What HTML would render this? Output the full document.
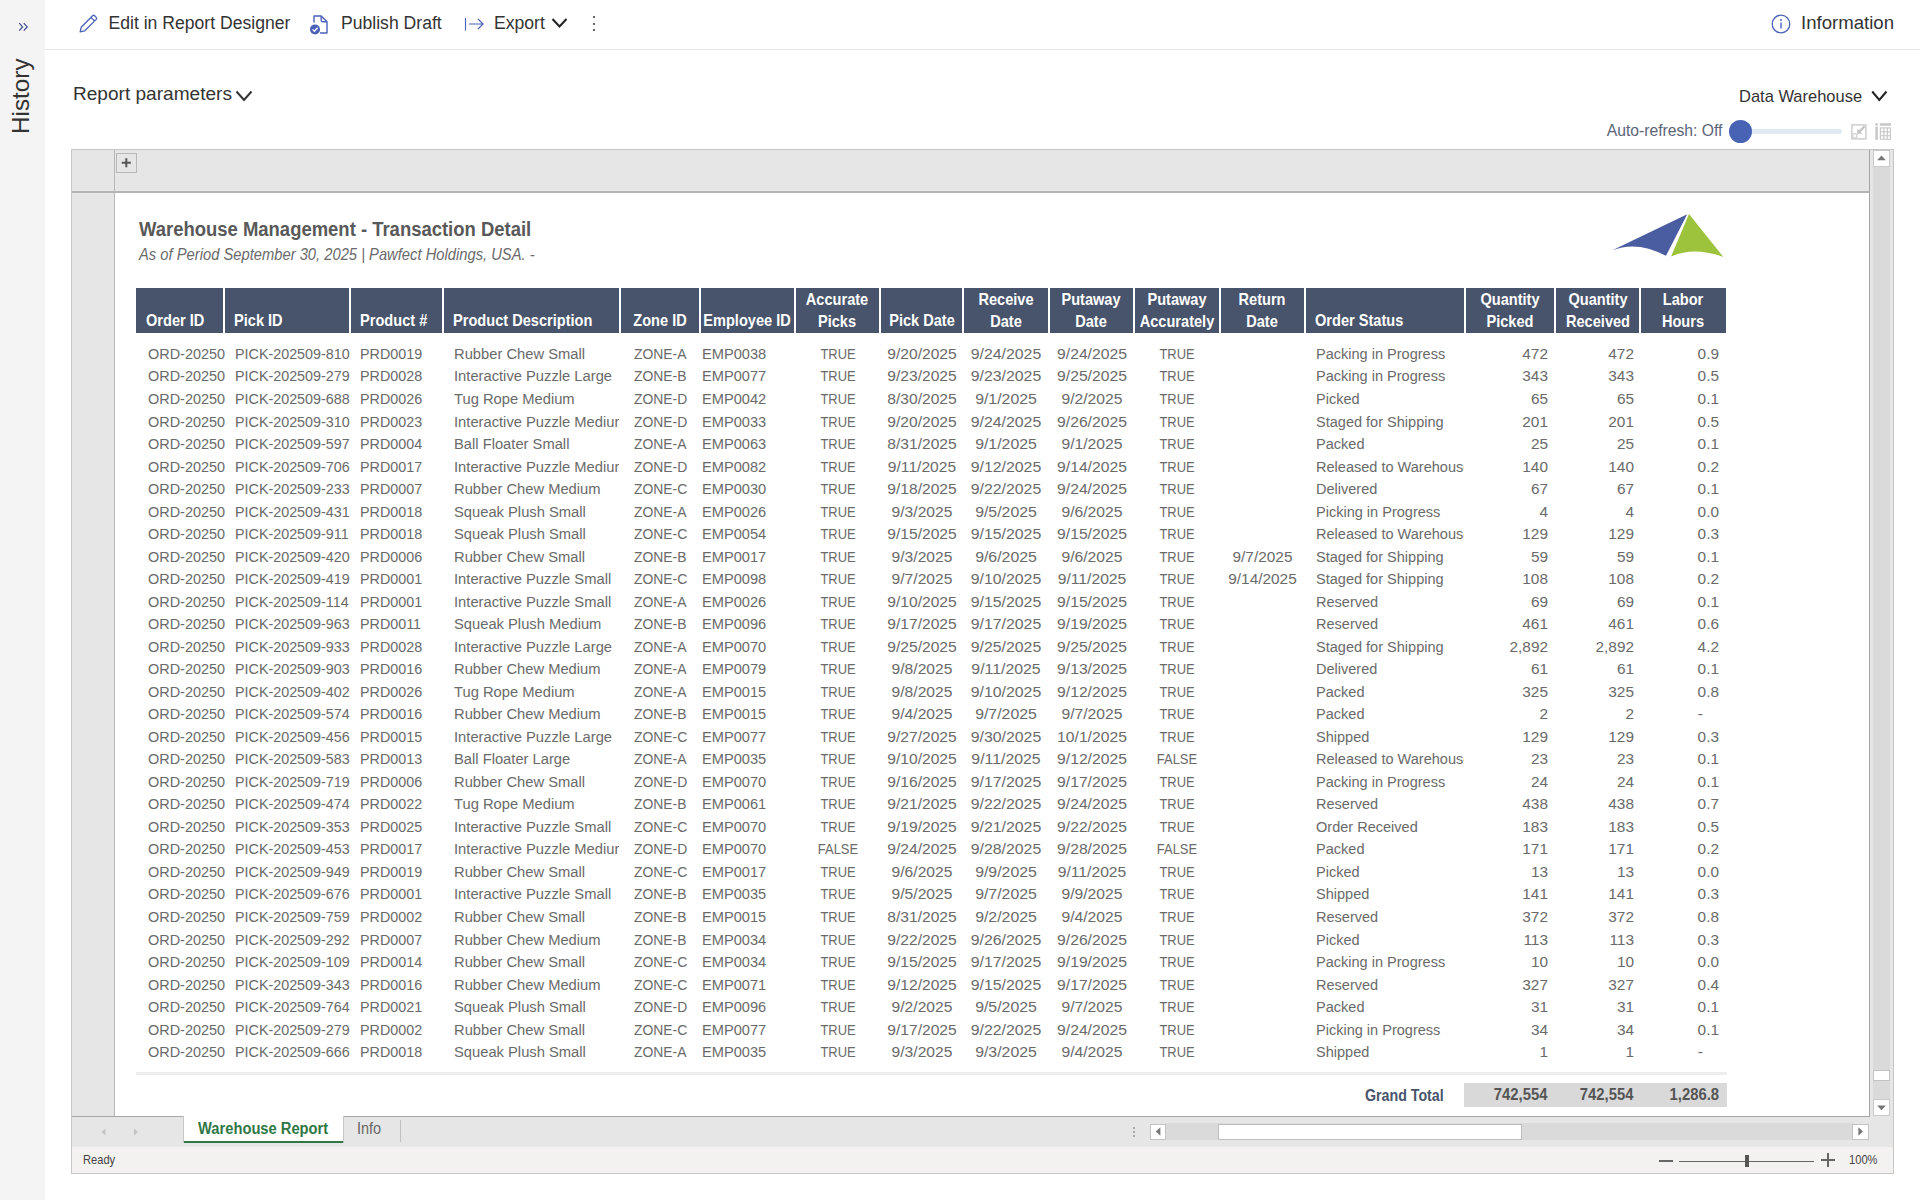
<!DOCTYPE html><html><head><meta charset="utf-8"><style>
html,body{margin:0;padding:0;overflow:hidden;}
body{width:1920px;height:1200px;position:relative;overflow:hidden;background:#fff;font-family:"Liberation Sans",sans-serif;}
.t{position:absolute;white-space:nowrap;line-height:1;}
.r{position:absolute;box-sizing:border-box;}
svg{position:absolute;overflow:visible;}
</style></head><body>
<div class="r" style="left:0px;top:0px;width:45px;height:1200px;background:#f4f4f4;"></div>
<svg style="left:18px;top:22px" width="11" height="10" viewBox="0 0 11 10"><path d="M1.2 1.2 L4.6 4.9 L1.2 8.6 M5.8 1.2 L9.2 4.9 L5.8 8.6" fill="none" stroke="#3d4b8a" stroke-width="1.2"/></svg>
<div class="t" style="left:-16px;top:84.5px;width:74px;height:24px;font-size:24.3px;color:#333;transform:rotate(-90deg);transform-origin:center center;text-align:center;">History</div>
<div class="r" style="left:45px;top:49px;width:1875px;height:1px;background:#e6e6e6;"></div>
<svg style="left:79px;top:14px" width="19" height="19" viewBox="0 0 19 19"><path d="M1.2 17.8 L2.2 13.2 L13.6 1.8 Q14.6 0.8 15.6 1.8 L17.2 3.4 Q18.2 4.4 17.2 5.4 L5.8 16.8 Z M12 3.4 L15.6 7" fill="none" stroke="#4a62b8" stroke-width="1.3" stroke-linejoin="round"/></svg>
<div class="t" style="left:108.50px;top:15.30px;font-size:17.6px;color:#333;font-weight:normal;font-style:normal;">Edit in Report Designer</div>
<svg style="left:309px;top:14px" width="20" height="22" viewBox="0 0 20 22"><path d="M5 8.5 V2 H12.2 L18 7.8 V19 H11" fill="none" stroke="#4a62b8" stroke-width="1.4" stroke-linejoin="round"/><path d="M12.2 2 V6.2 Q12.2 7.8 13.8 7.8 H18" fill="none" stroke="#4a62b8" stroke-width="1.4"/><circle cx="6" cy="15.4" r="5" fill="#4a62b8"/><path d="M3.6 15.4 L5.4 17.2 L8.6 13.8" fill="none" stroke="#fff" stroke-width="1.3"/></svg>
<div class="t" style="left:341.00px;top:15.30px;font-size:17.6px;color:#333;font-weight:normal;font-style:normal;">Publish Draft</div>
<svg style="left:464px;top:15px" width="22" height="18" viewBox="0 0 22 18"><path d="M1.5 3 V15.5 M5 9 H19 M14 4 L19 9 L14 14" fill="none" stroke="#4a62b8" stroke-width="1.15"/></svg>
<div class="t" style="left:494.00px;top:15.30px;font-size:17.6px;color:#333;font-weight:normal;font-style:normal;">Export</div>
<svg style="left:551px;top:17px" width="17" height="12" viewBox="0 0 17 12"><path d="M1.5 2 L8.5 9.5 L15.5 2" fill="none" stroke="#222" stroke-width="2"/></svg>
<div class="r" style="left:592.6px;top:16.2px;width:2.3px;height:2.3px;background:#333;border-radius:50%;"></div>
<div class="r" style="left:592.6px;top:22.7px;width:2.3px;height:2.3px;background:#333;border-radius:50%;"></div>
<div class="r" style="left:592.6px;top:29.2px;width:2.3px;height:2.3px;background:#333;border-radius:50%;"></div>
<svg style="left:1771px;top:14px" width="20" height="20" viewBox="0 0 20 20"><circle cx="10" cy="10" r="8.8" fill="none" stroke="#4a62b8" stroke-width="1.3"/><circle cx="10" cy="6" r="1" fill="#4a62b8"/><path d="M10 8.5 V14.5" stroke="#4a62b8" stroke-width="1.4"/></svg>
<div class="t" style="left:1801.00px;top:14.46px;font-size:18.6px;color:#333;font-weight:normal;font-style:normal;">Information</div>
<div class="t" style="left:73.00px;top:83.86px;font-size:19.07px;color:#333;font-weight:normal;font-style:normal;">Report parameters</div>
<svg style="left:235px;top:90px" width="18" height="12" viewBox="0 0 18 12"><path d="M1.5 1.5 L9 10 L16.5 1.5" fill="none" stroke="#333" stroke-width="2"/></svg>
<div class="t" style="left:1739.00px;top:87.81px;font-size:17px;color:#333;font-weight:normal;font-style:normal;transform:scaleX(0.97);transform-origin:left top;">Data Warehouse</div>
<svg style="left:1871px;top:90px" width="18" height="12" viewBox="0 0 18 12"><path d="M1.2 1.5 L8.3 10 L15.5 1.5" fill="none" stroke="#222" stroke-width="2"/></svg>
<div class="t" style="left:1606.70px;top:123.41px;font-size:15.7px;color:#5b6479;font-weight:normal;font-style:normal;">Auto-refresh: Off</div>
<div class="r" style="left:1740px;top:129.2px;width:102px;height:4.6px;background:#e1e9f5;border-radius:3px;"></div>
<div class="r" style="left:1729.1px;top:119.8px;width:22.8px;height:22.8px;border-radius:50%;background:#4863b3;"></div>
<svg style="left:1851px;top:124px" width="16" height="16" viewBox="0 0 16 16"><rect x="0.9" y="0.9" width="14" height="14" fill="none" stroke="#d2d2d2" stroke-width="1.6"/><rect x="1.8" y="9.8" width="4" height="4" fill="none" stroke="#d2d2d2" stroke-width="1.3"/><path d="M13.6 2.4 L7.6 8.4" stroke="#c4c4c4" stroke-width="2.2"/><path d="M6.2 4.6 V9.8 H11.4 Z" fill="#c4c4c4"/></svg>
<svg style="left:1875px;top:123px" width="17" height="17" viewBox="0 0 17 17"><g fill="#c9c9c9"><rect x="0.3" y="0.2" width="2.6" height="2.4"/><rect x="0.3" y="3.6" width="2.6" height="13.2"/><rect x="4.8" y="0.2" width="11.2" height="2.6"/><rect x="4.8" y="4.3" width="11.2" height="12.5"/></g><g fill="#fff"><rect x="6" y="5.5" width="2.3" height="2.8"/><rect x="9.5" y="5.5" width="2.3" height="2.8"/><rect x="13" y="5.5" width="1.9" height="2.8"/><rect x="6" y="9.4" width="2.3" height="2.8"/><rect x="9.5" y="9.4" width="2.3" height="2.8"/><rect x="13" y="9.4" width="1.9" height="2.8"/><rect x="6" y="13.3" width="2.3" height="2.4"/><rect x="9.5" y="13.3" width="2.3" height="2.4"/><rect x="13" y="13.3" width="1.9" height="2.4"/></g></svg>
<div class="r" style="left:71px;top:149px;width:1823px;height:1025px;background:#e6e6e6;border:1px solid #c6c6c6;"></div>
<div class="r" style="left:115px;top:193px;width:1754px;height:923px;background:#ffffff;"></div>
<div class="r" style="left:72px;top:191px;width:1797px;height:2px;background:#b4b4b4;"></div>
<div class="r" style="left:113.5px;top:150px;width:1.6px;height:966px;background:#b8b8b8;"></div>
<div class="r" style="left:1868.5px;top:150px;width:1.6px;height:967px;background:#a6a6a6;"></div>
<div class="r" style="left:72px;top:1115.5px;width:1797px;height:1.2px;background:#a6a6a6;"></div>
<div class="r" style="left:116px;top:152.5px;width:20.5px;height:20px;border:1px solid #b8b8b8;background:#e6e6e6;"></div>
<svg style="left:116px;top:152.5px" width="20" height="20" viewBox="0 0 20 20"><path d="M10.3 5.3 V14.3 M5.8 9.8 H14.8" stroke="#555" stroke-width="2"/></svg>
<div class="r" style="left:1873px;top:167px;width:17px;height:932px;background:#dadada;"></div>
<div class="r" style="left:1873.3px;top:150.3px;width:16.5px;height:16.5px;background:#fff;border:1px solid #c9c9c9;"></div>
<svg style="left:1873px;top:150px" width="17" height="17" viewBox="0 0 17 17"><path d="M4.2 10.2 L8.5 5.4 L12.8 10.2 Z" fill="#777"/></svg>
<div class="r" style="left:1873.3px;top:1070.3px;width:16.5px;height:10.5px;background:#fff;border:1px solid #c3c3c3;"></div>
<div class="r" style="left:1873.3px;top:1099.3px;width:16.5px;height:16.5px;background:#fff;border:1px solid #c9c9c9;"></div>
<svg style="left:1873px;top:1099px" width="17" height="17" viewBox="0 0 17 17"><path d="M4.2 6.6 L8.5 11.2 L12.8 6.6 Z" fill="#777"/></svg>
<div class="r" style="left:72px;top:1117px;width:1821px;height:30px;background:#e6e6e6;"></div>
<div class="r" style="left:184px;top:1116px;width:159px;height:25.5px;background:#ffffff;"></div>
<div class="r" style="left:184px;top:1141.3px;width:159px;height:2.2px;background:#2f7845;"></div>
<div class="r" style="left:182.7px;top:1116px;width:1.3px;height:27px;background:#c6c6c6;"></div>
<div class="r" style="left:342.5px;top:1116px;width:1.3px;height:27px;background:#c6c6c6;"></div>
<div class="t" style="left:198.00px;top:1120.99px;font-size:15.6px;color:#2f7845;font-weight:bold;font-style:normal;transform:scaleX(0.943);transform-origin:left top;">Warehouse Report</div>
<div class="t" style="left:356.80px;top:1120.99px;font-size:15.6px;color:#666;font-weight:normal;font-style:normal;transform:scaleX(0.93);transform-origin:left top;">Info</div>
<div class="r" style="left:399.5px;top:1120px;width:1.2px;height:22px;background:#c0c0c0;"></div>
<svg style="left:98px;top:1126px" width="44" height="12" viewBox="0 0 44 12"><path d="M7.5 2.5 L3.5 6 L7.5 9.5 Z M36 2.5 L40 6 L36 9.5 Z" fill="#c4c4c4"/></svg>
<div class="r" style="left:1133px;top:1127px;width:1.8px;height:1.8px;background:#aaa;"></div>
<div class="r" style="left:1133px;top:1131px;width:1.8px;height:1.8px;background:#aaa;"></div>
<div class="r" style="left:1133px;top:1135px;width:1.8px;height:1.8px;background:#aaa;"></div>
<div class="r" style="left:1165px;top:1123px;width:688px;height:17px;background:#dadada;"></div>
<div class="r" style="left:1150.3px;top:1123.5px;width:16px;height:16.5px;background:#fff;border:1px solid #c3c3c3;"></div>
<svg style="left:1150px;top:1123px" width="17" height="17" viewBox="0 0 17 17"><path d="M10.4 4.2 L5.8 8.5 L10.4 12.8 Z" fill="#777"/></svg>
<div class="r" style="left:1217.5px;top:1123.5px;width:304.5px;height:16.5px;background:#fff;border:1px solid #bdbdbd;"></div>
<div class="r" style="left:1852.3px;top:1123.5px;width:16.5px;height:16.5px;background:#fff;border:1px solid #c3c3c3;"></div>
<svg style="left:1852px;top:1123px" width="17" height="17" viewBox="0 0 17 17"><path d="M6.4 4.2 L11 8.5 L6.4 12.8 Z" fill="#777"/></svg>
<div class="r" style="left:72px;top:1147px;width:1821px;height:26px;background:#f3f2f1;"></div>
<div class="t" style="left:83.30px;top:1152.91px;font-size:13.1px;color:#444;font-weight:normal;font-style:normal;transform:scaleX(0.85);transform-origin:left top;">Ready</div>
<div class="r" style="left:1659.3px;top:1160.3px;width:13.5px;height:1.6px;background:#666;"></div>
<div class="r" style="left:1679px;top:1160.7px;width:134.5px;height:1.1px;background:#666;"></div>
<div class="r" style="left:1745.3px;top:1155px;width:3.6px;height:11.5px;background:#555;"></div>
<div class="r" style="left:1821px;top:1159.4px;width:13.5px;height:1.6px;background:#666;"></div>
<div class="r" style="left:1827px;top:1153px;width:1.6px;height:13.5px;background:#666;"></div>
<div class="t" style="left:1848.50px;top:1153.84px;font-size:12px;color:#444;font-weight:normal;font-style:normal;transform:scaleX(0.93);transform-origin:left top;">100%</div>
<div class="t" style="left:139.20px;top:219.83px;font-size:19.4px;color:#595959;font-weight:bold;font-style:normal;transform:scaleX(0.952);transform-origin:left top;">Warehouse Management - Transaction Detail</div>
<div class="t" style="left:139.20px;top:247.14px;font-size:15.9px;color:#6a6a6a;font-weight:normal;font-style:italic;transform:scaleX(0.928);transform-origin:left top;">As of Period September 30, 2025 | Pawfect Holdings, USA. -</div>
<svg style="left:1610px;top:210px" width="118" height="50" viewBox="0 0 118 50"><path d="M77.2 4.2 L2.4 40.3 Q26.8 30.35 56 45.8 Z" fill="#4a5da1"/><path d="M79 4 L113.3 46.9 Q83.8 36.1 61.1 46.5 Z" fill="#9dc23b"/></svg>
<div class="r" style="left:136.2px;top:287.6px;width:1589.8px;height:45.599999999999966px;background:#48546c;"></div>
<div class="r" style="left:222.75px;top:287.6px;width:2px;height:45.599999999999966px;background:#ffffff;"></div>
<div class="r" style="left:349px;top:287.6px;width:2px;height:45.599999999999966px;background:#ffffff;"></div>
<div class="r" style="left:442.3px;top:287.6px;width:2px;height:45.599999999999966px;background:#ffffff;"></div>
<div class="r" style="left:619.4px;top:287.6px;width:2px;height:45.599999999999966px;background:#ffffff;"></div>
<div class="r" style="left:699px;top:287.6px;width:2px;height:45.599999999999966px;background:#ffffff;"></div>
<div class="r" style="left:793.6px;top:287.6px;width:2px;height:45.599999999999966px;background:#ffffff;"></div>
<div class="r" style="left:879px;top:287.6px;width:2px;height:45.599999999999966px;background:#ffffff;"></div>
<div class="r" style="left:962.3px;top:287.6px;width:2px;height:45.599999999999966px;background:#ffffff;"></div>
<div class="r" style="left:1047.75px;top:287.6px;width:2px;height:45.599999999999966px;background:#ffffff;"></div>
<div class="r" style="left:1133px;top:287.6px;width:2px;height:45.599999999999966px;background:#ffffff;"></div>
<div class="r" style="left:1218.6px;top:287.6px;width:2px;height:45.599999999999966px;background:#ffffff;"></div>
<div class="r" style="left:1304px;top:287.6px;width:2px;height:45.599999999999966px;background:#ffffff;"></div>
<div class="r" style="left:1463.6px;top:287.6px;width:2px;height:45.599999999999966px;background:#ffffff;"></div>
<div class="r" style="left:1554px;top:287.6px;width:2px;height:45.599999999999966px;background:#ffffff;"></div>
<div class="r" style="left:1639.4px;top:287.6px;width:2px;height:45.599999999999966px;background:#ffffff;"></div>
<div class="t" style="left:146.40px;top:313.01px;font-size:15.7px;color:#fff;font-weight:bold;font-style:normal;transform:scaleX(0.93);transform-origin:left top;">Order ID</div>
<div class="t" style="left:234.15px;top:313.01px;font-size:15.7px;color:#fff;font-weight:bold;font-style:normal;transform:scaleX(0.93);transform-origin:left top;">Pick ID</div>
<div class="t" style="left:360.40px;top:313.01px;font-size:15.7px;color:#fff;font-weight:bold;font-style:normal;transform:scaleX(0.93);transform-origin:left top;">Product #</div>
<div class="t" style="left:452.70px;top:313.01px;font-size:15.7px;color:#fff;font-weight:bold;font-style:normal;transform:scaleX(0.93);transform-origin:left top;">Product Description</div>
<div class="t" style="left:160.20px;width:1000px;text-align:center;top:313.01px;font-size:15.7px;color:#fff;font-weight:bold;font-style:normal;transform:scaleX(0.93);transform-origin:center top;">Zone ID</div>
<div class="t" style="left:247.30px;width:1000px;text-align:center;top:313.01px;font-size:15.7px;color:#fff;font-weight:bold;font-style:normal;transform:scaleX(0.93);transform-origin:center top;">Employee ID</div>
<div class="t" style="left:337.30px;width:1000px;text-align:center;top:291.71px;font-size:15.7px;color:#fff;font-weight:bold;font-style:normal;transform:scaleX(0.93);transform-origin:center top;">Accurate</div>
<div class="t" style="left:337.30px;width:1000px;text-align:center;top:313.51px;font-size:15.7px;color:#fff;font-weight:bold;font-style:normal;transform:scaleX(0.93);transform-origin:center top;">Picks</div>
<div class="t" style="left:421.65px;width:1000px;text-align:center;top:313.01px;font-size:15.7px;color:#fff;font-weight:bold;font-style:normal;transform:scaleX(0.93);transform-origin:center top;">Pick Date</div>
<div class="t" style="left:506.02px;width:1000px;text-align:center;top:291.71px;font-size:15.7px;color:#fff;font-weight:bold;font-style:normal;transform:scaleX(0.93);transform-origin:center top;">Receive</div>
<div class="t" style="left:506.02px;width:1000px;text-align:center;top:313.51px;font-size:15.7px;color:#fff;font-weight:bold;font-style:normal;transform:scaleX(0.93);transform-origin:center top;">Date</div>
<div class="t" style="left:591.38px;width:1000px;text-align:center;top:291.71px;font-size:15.7px;color:#fff;font-weight:bold;font-style:normal;transform:scaleX(0.93);transform-origin:center top;">Putaway</div>
<div class="t" style="left:591.38px;width:1000px;text-align:center;top:313.51px;font-size:15.7px;color:#fff;font-weight:bold;font-style:normal;transform:scaleX(0.93);transform-origin:center top;">Date</div>
<div class="t" style="left:676.80px;width:1000px;text-align:center;top:291.71px;font-size:15.7px;color:#fff;font-weight:bold;font-style:normal;transform:scaleX(0.93);transform-origin:center top;">Putaway</div>
<div class="t" style="left:676.80px;width:1000px;text-align:center;top:313.51px;font-size:15.7px;color:#fff;font-weight:bold;font-style:normal;transform:scaleX(0.93);transform-origin:center top;">Accurately</div>
<div class="t" style="left:762.30px;width:1000px;text-align:center;top:291.71px;font-size:15.7px;color:#fff;font-weight:bold;font-style:normal;transform:scaleX(0.93);transform-origin:center top;">Return</div>
<div class="t" style="left:762.30px;width:1000px;text-align:center;top:313.51px;font-size:15.7px;color:#fff;font-weight:bold;font-style:normal;transform:scaleX(0.93);transform-origin:center top;">Date</div>
<div class="t" style="left:1315.40px;top:313.01px;font-size:15.7px;color:#fff;font-weight:bold;font-style:normal;transform:scaleX(0.93);transform-origin:left top;">Order Status</div>
<div class="t" style="left:1009.80px;width:1000px;text-align:center;top:291.71px;font-size:15.7px;color:#fff;font-weight:bold;font-style:normal;transform:scaleX(0.93);transform-origin:center top;">Quantity</div>
<div class="t" style="left:1009.80px;width:1000px;text-align:center;top:313.51px;font-size:15.7px;color:#fff;font-weight:bold;font-style:normal;transform:scaleX(0.93);transform-origin:center top;">Picked</div>
<div class="t" style="left:1097.70px;width:1000px;text-align:center;top:291.71px;font-size:15.7px;color:#fff;font-weight:bold;font-style:normal;transform:scaleX(0.93);transform-origin:center top;">Quantity</div>
<div class="t" style="left:1097.70px;width:1000px;text-align:center;top:313.51px;font-size:15.7px;color:#fff;font-weight:bold;font-style:normal;transform:scaleX(0.93);transform-origin:center top;">Received</div>
<div class="t" style="left:1183.20px;width:1000px;text-align:center;top:291.71px;font-size:15.7px;color:#fff;font-weight:bold;font-style:normal;transform:scaleX(0.93);transform-origin:center top;">Labor</div>
<div class="t" style="left:1183.20px;width:1000px;text-align:center;top:313.51px;font-size:15.7px;color:#fff;font-weight:bold;font-style:normal;transform:scaleX(0.93);transform-origin:center top;">Hours</div>
<div style="position:absolute;left:0;top:0;width:619px;height:1200px;overflow:hidden;">
<div class="t" style="left:453.50px;top:345.96px;font-size:15.4px;color:#6a6a6a;font-weight:normal;font-style:normal;transform:scaleX(0.957);transform-origin:left top;">Rubber Chew Small</div>
<div class="t" style="left:453.50px;top:368.49px;font-size:15.4px;color:#6a6a6a;font-weight:normal;font-style:normal;transform:scaleX(0.957);transform-origin:left top;">Interactive Puzzle Large</div>
<div class="t" style="left:453.50px;top:391.01px;font-size:15.4px;color:#6a6a6a;font-weight:normal;font-style:normal;transform:scaleX(0.957);transform-origin:left top;">Tug Rope Medium</div>
<div class="t" style="left:453.50px;top:413.53px;font-size:15.4px;color:#6a6a6a;font-weight:normal;font-style:normal;transform:scaleX(0.957);transform-origin:left top;">Interactive Puzzle Medium</div>
<div class="t" style="left:453.50px;top:436.05px;font-size:15.4px;color:#6a6a6a;font-weight:normal;font-style:normal;transform:scaleX(0.957);transform-origin:left top;">Ball Floater Small</div>
<div class="t" style="left:453.50px;top:458.57px;font-size:15.4px;color:#6a6a6a;font-weight:normal;font-style:normal;transform:scaleX(0.957);transform-origin:left top;">Interactive Puzzle Medium</div>
<div class="t" style="left:453.50px;top:481.10px;font-size:15.4px;color:#6a6a6a;font-weight:normal;font-style:normal;transform:scaleX(0.957);transform-origin:left top;">Rubber Chew Medium</div>
<div class="t" style="left:453.50px;top:503.62px;font-size:15.4px;color:#6a6a6a;font-weight:normal;font-style:normal;transform:scaleX(0.957);transform-origin:left top;">Squeak Plush Small</div>
<div class="t" style="left:453.50px;top:526.14px;font-size:15.4px;color:#6a6a6a;font-weight:normal;font-style:normal;transform:scaleX(0.957);transform-origin:left top;">Squeak Plush Small</div>
<div class="t" style="left:453.50px;top:548.66px;font-size:15.4px;color:#6a6a6a;font-weight:normal;font-style:normal;transform:scaleX(0.957);transform-origin:left top;">Rubber Chew Small</div>
<div class="t" style="left:453.50px;top:571.18px;font-size:15.4px;color:#6a6a6a;font-weight:normal;font-style:normal;transform:scaleX(0.957);transform-origin:left top;">Interactive Puzzle Small</div>
<div class="t" style="left:453.50px;top:593.71px;font-size:15.4px;color:#6a6a6a;font-weight:normal;font-style:normal;transform:scaleX(0.957);transform-origin:left top;">Interactive Puzzle Small</div>
<div class="t" style="left:453.50px;top:616.23px;font-size:15.4px;color:#6a6a6a;font-weight:normal;font-style:normal;transform:scaleX(0.957);transform-origin:left top;">Squeak Plush Medium</div>
<div class="t" style="left:453.50px;top:638.75px;font-size:15.4px;color:#6a6a6a;font-weight:normal;font-style:normal;transform:scaleX(0.957);transform-origin:left top;">Interactive Puzzle Large</div>
<div class="t" style="left:453.50px;top:661.27px;font-size:15.4px;color:#6a6a6a;font-weight:normal;font-style:normal;transform:scaleX(0.957);transform-origin:left top;">Rubber Chew Medium</div>
<div class="t" style="left:453.50px;top:683.79px;font-size:15.4px;color:#6a6a6a;font-weight:normal;font-style:normal;transform:scaleX(0.957);transform-origin:left top;">Tug Rope Medium</div>
<div class="t" style="left:453.50px;top:706.32px;font-size:15.4px;color:#6a6a6a;font-weight:normal;font-style:normal;transform:scaleX(0.957);transform-origin:left top;">Rubber Chew Medium</div>
<div class="t" style="left:453.50px;top:728.84px;font-size:15.4px;color:#6a6a6a;font-weight:normal;font-style:normal;transform:scaleX(0.957);transform-origin:left top;">Interactive Puzzle Large</div>
<div class="t" style="left:453.50px;top:751.36px;font-size:15.4px;color:#6a6a6a;font-weight:normal;font-style:normal;transform:scaleX(0.957);transform-origin:left top;">Ball Floater Large</div>
<div class="t" style="left:453.50px;top:773.88px;font-size:15.4px;color:#6a6a6a;font-weight:normal;font-style:normal;transform:scaleX(0.957);transform-origin:left top;">Rubber Chew Small</div>
<div class="t" style="left:453.50px;top:796.40px;font-size:15.4px;color:#6a6a6a;font-weight:normal;font-style:normal;transform:scaleX(0.957);transform-origin:left top;">Tug Rope Medium</div>
<div class="t" style="left:453.50px;top:818.93px;font-size:15.4px;color:#6a6a6a;font-weight:normal;font-style:normal;transform:scaleX(0.957);transform-origin:left top;">Interactive Puzzle Small</div>
<div class="t" style="left:453.50px;top:841.45px;font-size:15.4px;color:#6a6a6a;font-weight:normal;font-style:normal;transform:scaleX(0.957);transform-origin:left top;">Interactive Puzzle Medium</div>
<div class="t" style="left:453.50px;top:863.97px;font-size:15.4px;color:#6a6a6a;font-weight:normal;font-style:normal;transform:scaleX(0.957);transform-origin:left top;">Rubber Chew Small</div>
<div class="t" style="left:453.50px;top:886.49px;font-size:15.4px;color:#6a6a6a;font-weight:normal;font-style:normal;transform:scaleX(0.957);transform-origin:left top;">Interactive Puzzle Small</div>
<div class="t" style="left:453.50px;top:909.01px;font-size:15.4px;color:#6a6a6a;font-weight:normal;font-style:normal;transform:scaleX(0.957);transform-origin:left top;">Rubber Chew Small</div>
<div class="t" style="left:453.50px;top:931.54px;font-size:15.4px;color:#6a6a6a;font-weight:normal;font-style:normal;transform:scaleX(0.957);transform-origin:left top;">Rubber Chew Medium</div>
<div class="t" style="left:453.50px;top:954.06px;font-size:15.4px;color:#6a6a6a;font-weight:normal;font-style:normal;transform:scaleX(0.957);transform-origin:left top;">Rubber Chew Small</div>
<div class="t" style="left:453.50px;top:976.58px;font-size:15.4px;color:#6a6a6a;font-weight:normal;font-style:normal;transform:scaleX(0.957);transform-origin:left top;">Rubber Chew Medium</div>
<div class="t" style="left:453.50px;top:999.10px;font-size:15.4px;color:#6a6a6a;font-weight:normal;font-style:normal;transform:scaleX(0.957);transform-origin:left top;">Squeak Plush Small</div>
<div class="t" style="left:453.50px;top:1021.62px;font-size:15.4px;color:#6a6a6a;font-weight:normal;font-style:normal;transform:scaleX(0.957);transform-origin:left top;">Rubber Chew Small</div>
<div class="t" style="left:453.50px;top:1044.15px;font-size:15.4px;color:#6a6a6a;font-weight:normal;font-style:normal;transform:scaleX(0.957);transform-origin:left top;">Squeak Plush Small</div>
</div>
<div style="position:absolute;left:0;top:0;width:1464px;height:1200px;overflow:hidden;">
<div class="t" style="left:1316.00px;top:345.96px;font-size:15.4px;color:#6a6a6a;font-weight:normal;font-style:normal;transform:scaleX(0.944);transform-origin:left top;">Packing in Progress</div>
<div class="t" style="left:1316.00px;top:368.49px;font-size:15.4px;color:#6a6a6a;font-weight:normal;font-style:normal;transform:scaleX(0.944);transform-origin:left top;">Packing in Progress</div>
<div class="t" style="left:1316.00px;top:391.01px;font-size:15.4px;color:#6a6a6a;font-weight:normal;font-style:normal;transform:scaleX(0.944);transform-origin:left top;">Picked</div>
<div class="t" style="left:1316.00px;top:413.53px;font-size:15.4px;color:#6a6a6a;font-weight:normal;font-style:normal;transform:scaleX(0.944);transform-origin:left top;">Staged for Shipping</div>
<div class="t" style="left:1316.00px;top:436.05px;font-size:15.4px;color:#6a6a6a;font-weight:normal;font-style:normal;transform:scaleX(0.944);transform-origin:left top;">Packed</div>
<div class="t" style="left:1316.00px;top:458.57px;font-size:15.4px;color:#6a6a6a;font-weight:normal;font-style:normal;transform:scaleX(0.944);transform-origin:left top;">Released to Warehouse</div>
<div class="t" style="left:1316.00px;top:481.10px;font-size:15.4px;color:#6a6a6a;font-weight:normal;font-style:normal;transform:scaleX(0.944);transform-origin:left top;">Delivered</div>
<div class="t" style="left:1316.00px;top:503.62px;font-size:15.4px;color:#6a6a6a;font-weight:normal;font-style:normal;transform:scaleX(0.944);transform-origin:left top;">Picking in Progress</div>
<div class="t" style="left:1316.00px;top:526.14px;font-size:15.4px;color:#6a6a6a;font-weight:normal;font-style:normal;transform:scaleX(0.944);transform-origin:left top;">Released to Warehouse</div>
<div class="t" style="left:1316.00px;top:548.66px;font-size:15.4px;color:#6a6a6a;font-weight:normal;font-style:normal;transform:scaleX(0.944);transform-origin:left top;">Staged for Shipping</div>
<div class="t" style="left:1316.00px;top:571.18px;font-size:15.4px;color:#6a6a6a;font-weight:normal;font-style:normal;transform:scaleX(0.944);transform-origin:left top;">Staged for Shipping</div>
<div class="t" style="left:1316.00px;top:593.71px;font-size:15.4px;color:#6a6a6a;font-weight:normal;font-style:normal;transform:scaleX(0.944);transform-origin:left top;">Reserved</div>
<div class="t" style="left:1316.00px;top:616.23px;font-size:15.4px;color:#6a6a6a;font-weight:normal;font-style:normal;transform:scaleX(0.944);transform-origin:left top;">Reserved</div>
<div class="t" style="left:1316.00px;top:638.75px;font-size:15.4px;color:#6a6a6a;font-weight:normal;font-style:normal;transform:scaleX(0.944);transform-origin:left top;">Staged for Shipping</div>
<div class="t" style="left:1316.00px;top:661.27px;font-size:15.4px;color:#6a6a6a;font-weight:normal;font-style:normal;transform:scaleX(0.944);transform-origin:left top;">Delivered</div>
<div class="t" style="left:1316.00px;top:683.79px;font-size:15.4px;color:#6a6a6a;font-weight:normal;font-style:normal;transform:scaleX(0.944);transform-origin:left top;">Packed</div>
<div class="t" style="left:1316.00px;top:706.32px;font-size:15.4px;color:#6a6a6a;font-weight:normal;font-style:normal;transform:scaleX(0.944);transform-origin:left top;">Packed</div>
<div class="t" style="left:1316.00px;top:728.84px;font-size:15.4px;color:#6a6a6a;font-weight:normal;font-style:normal;transform:scaleX(0.944);transform-origin:left top;">Shipped</div>
<div class="t" style="left:1316.00px;top:751.36px;font-size:15.4px;color:#6a6a6a;font-weight:normal;font-style:normal;transform:scaleX(0.944);transform-origin:left top;">Released to Warehouse</div>
<div class="t" style="left:1316.00px;top:773.88px;font-size:15.4px;color:#6a6a6a;font-weight:normal;font-style:normal;transform:scaleX(0.944);transform-origin:left top;">Packing in Progress</div>
<div class="t" style="left:1316.00px;top:796.40px;font-size:15.4px;color:#6a6a6a;font-weight:normal;font-style:normal;transform:scaleX(0.944);transform-origin:left top;">Reserved</div>
<div class="t" style="left:1316.00px;top:818.93px;font-size:15.4px;color:#6a6a6a;font-weight:normal;font-style:normal;transform:scaleX(0.944);transform-origin:left top;">Order Received</div>
<div class="t" style="left:1316.00px;top:841.45px;font-size:15.4px;color:#6a6a6a;font-weight:normal;font-style:normal;transform:scaleX(0.944);transform-origin:left top;">Packed</div>
<div class="t" style="left:1316.00px;top:863.97px;font-size:15.4px;color:#6a6a6a;font-weight:normal;font-style:normal;transform:scaleX(0.944);transform-origin:left top;">Picked</div>
<div class="t" style="left:1316.00px;top:886.49px;font-size:15.4px;color:#6a6a6a;font-weight:normal;font-style:normal;transform:scaleX(0.944);transform-origin:left top;">Shipped</div>
<div class="t" style="left:1316.00px;top:909.01px;font-size:15.4px;color:#6a6a6a;font-weight:normal;font-style:normal;transform:scaleX(0.944);transform-origin:left top;">Reserved</div>
<div class="t" style="left:1316.00px;top:931.54px;font-size:15.4px;color:#6a6a6a;font-weight:normal;font-style:normal;transform:scaleX(0.944);transform-origin:left top;">Picked</div>
<div class="t" style="left:1316.00px;top:954.06px;font-size:15.4px;color:#6a6a6a;font-weight:normal;font-style:normal;transform:scaleX(0.944);transform-origin:left top;">Packing in Progress</div>
<div class="t" style="left:1316.00px;top:976.58px;font-size:15.4px;color:#6a6a6a;font-weight:normal;font-style:normal;transform:scaleX(0.944);transform-origin:left top;">Reserved</div>
<div class="t" style="left:1316.00px;top:999.10px;font-size:15.4px;color:#6a6a6a;font-weight:normal;font-style:normal;transform:scaleX(0.944);transform-origin:left top;">Packed</div>
<div class="t" style="left:1316.00px;top:1021.62px;font-size:15.4px;color:#6a6a6a;font-weight:normal;font-style:normal;transform:scaleX(0.944);transform-origin:left top;">Picking in Progress</div>
<div class="t" style="left:1316.00px;top:1044.15px;font-size:15.4px;color:#6a6a6a;font-weight:normal;font-style:normal;transform:scaleX(0.944);transform-origin:left top;">Shipped</div>
</div>
<div class="t" style="left:147.50px;top:345.96px;font-size:15.4px;color:#6a6a6a;font-weight:normal;font-style:normal;transform:scaleX(0.939);transform-origin:left top;">ORD-20250</div>
<div class="t" style="left:235.00px;top:345.96px;font-size:15.4px;color:#6a6a6a;font-weight:normal;font-style:normal;transform:scaleX(0.931);transform-origin:left top;">PICK-202509-810</div>
<div class="t" style="left:360.00px;top:345.96px;font-size:15.4px;color:#6a6a6a;font-weight:normal;font-style:normal;transform:scaleX(0.931);transform-origin:left top;">PRD0019</div>
<div class="t" style="left:634.00px;top:345.96px;font-size:15.4px;color:#6a6a6a;font-weight:normal;font-style:normal;transform:scaleX(0.903);transform-origin:left top;">ZONE-A</div>
<div class="t" style="left:702.00px;top:345.96px;font-size:15.4px;color:#6a6a6a;font-weight:normal;font-style:normal;transform:scaleX(0.949);transform-origin:left top;">EMP0038</div>
<div class="t" style="left:337.50px;width:1000px;text-align:center;top:345.96px;font-size:15.4px;color:#6a6a6a;font-weight:normal;font-style:normal;transform:scaleX(0.841);transform-origin:center top;">TRUE</div>
<div class="t" style="left:421.80px;width:1000px;text-align:center;top:345.96px;font-size:15.4px;color:#6a6a6a;font-weight:normal;font-style:normal;transform:scaleX(1.015);transform-origin:center top;">9/20/2025</div>
<div class="t" style="left:506.30px;width:1000px;text-align:center;top:345.96px;font-size:15.4px;color:#6a6a6a;font-weight:normal;font-style:normal;transform:scaleX(1.03);transform-origin:center top;">9/24/2025</div>
<div class="t" style="left:591.50px;width:1000px;text-align:center;top:345.96px;font-size:15.4px;color:#6a6a6a;font-weight:normal;font-style:normal;transform:scaleX(1.02);transform-origin:center top;">9/24/2025</div>
<div class="t" style="left:677.00px;width:1000px;text-align:center;top:345.96px;font-size:15.4px;color:#6a6a6a;font-weight:normal;font-style:normal;transform:scaleX(0.841);transform-origin:center top;">TRUE</div>
<div class="t" style="right:372.00px;top:345.96px;font-size:15.4px;color:#6a6a6a;font-weight:normal;font-style:normal;">472</div>
<div class="t" style="right:286.00px;top:345.96px;font-size:15.4px;color:#6a6a6a;font-weight:normal;font-style:normal;">472</div>
<div class="t" style="right:201.00px;top:345.96px;font-size:15.4px;color:#6a6a6a;font-weight:normal;font-style:normal;">0.9</div>
<div class="t" style="left:147.50px;top:368.49px;font-size:15.4px;color:#6a6a6a;font-weight:normal;font-style:normal;transform:scaleX(0.939);transform-origin:left top;">ORD-20250</div>
<div class="t" style="left:235.00px;top:368.49px;font-size:15.4px;color:#6a6a6a;font-weight:normal;font-style:normal;transform:scaleX(0.931);transform-origin:left top;">PICK-202509-279</div>
<div class="t" style="left:360.00px;top:368.49px;font-size:15.4px;color:#6a6a6a;font-weight:normal;font-style:normal;transform:scaleX(0.931);transform-origin:left top;">PRD0028</div>
<div class="t" style="left:634.00px;top:368.49px;font-size:15.4px;color:#6a6a6a;font-weight:normal;font-style:normal;transform:scaleX(0.903);transform-origin:left top;">ZONE-B</div>
<div class="t" style="left:702.00px;top:368.49px;font-size:15.4px;color:#6a6a6a;font-weight:normal;font-style:normal;transform:scaleX(0.949);transform-origin:left top;">EMP0077</div>
<div class="t" style="left:337.50px;width:1000px;text-align:center;top:368.49px;font-size:15.4px;color:#6a6a6a;font-weight:normal;font-style:normal;transform:scaleX(0.841);transform-origin:center top;">TRUE</div>
<div class="t" style="left:421.80px;width:1000px;text-align:center;top:368.49px;font-size:15.4px;color:#6a6a6a;font-weight:normal;font-style:normal;transform:scaleX(1.015);transform-origin:center top;">9/23/2025</div>
<div class="t" style="left:506.30px;width:1000px;text-align:center;top:368.49px;font-size:15.4px;color:#6a6a6a;font-weight:normal;font-style:normal;transform:scaleX(1.03);transform-origin:center top;">9/23/2025</div>
<div class="t" style="left:591.50px;width:1000px;text-align:center;top:368.49px;font-size:15.4px;color:#6a6a6a;font-weight:normal;font-style:normal;transform:scaleX(1.02);transform-origin:center top;">9/25/2025</div>
<div class="t" style="left:677.00px;width:1000px;text-align:center;top:368.49px;font-size:15.4px;color:#6a6a6a;font-weight:normal;font-style:normal;transform:scaleX(0.841);transform-origin:center top;">TRUE</div>
<div class="t" style="right:372.00px;top:368.49px;font-size:15.4px;color:#6a6a6a;font-weight:normal;font-style:normal;">343</div>
<div class="t" style="right:286.00px;top:368.49px;font-size:15.4px;color:#6a6a6a;font-weight:normal;font-style:normal;">343</div>
<div class="t" style="right:201.00px;top:368.49px;font-size:15.4px;color:#6a6a6a;font-weight:normal;font-style:normal;">0.5</div>
<div class="t" style="left:147.50px;top:391.01px;font-size:15.4px;color:#6a6a6a;font-weight:normal;font-style:normal;transform:scaleX(0.939);transform-origin:left top;">ORD-20250</div>
<div class="t" style="left:235.00px;top:391.01px;font-size:15.4px;color:#6a6a6a;font-weight:normal;font-style:normal;transform:scaleX(0.931);transform-origin:left top;">PICK-202509-688</div>
<div class="t" style="left:360.00px;top:391.01px;font-size:15.4px;color:#6a6a6a;font-weight:normal;font-style:normal;transform:scaleX(0.931);transform-origin:left top;">PRD0026</div>
<div class="t" style="left:634.00px;top:391.01px;font-size:15.4px;color:#6a6a6a;font-weight:normal;font-style:normal;transform:scaleX(0.903);transform-origin:left top;">ZONE-D</div>
<div class="t" style="left:702.00px;top:391.01px;font-size:15.4px;color:#6a6a6a;font-weight:normal;font-style:normal;transform:scaleX(0.949);transform-origin:left top;">EMP0042</div>
<div class="t" style="left:337.50px;width:1000px;text-align:center;top:391.01px;font-size:15.4px;color:#6a6a6a;font-weight:normal;font-style:normal;transform:scaleX(0.841);transform-origin:center top;">TRUE</div>
<div class="t" style="left:421.80px;width:1000px;text-align:center;top:391.01px;font-size:15.4px;color:#6a6a6a;font-weight:normal;font-style:normal;transform:scaleX(1.015);transform-origin:center top;">8/30/2025</div>
<div class="t" style="left:506.30px;width:1000px;text-align:center;top:391.01px;font-size:15.4px;color:#6a6a6a;font-weight:normal;font-style:normal;transform:scaleX(1.03);transform-origin:center top;">9/1/2025</div>
<div class="t" style="left:591.50px;width:1000px;text-align:center;top:391.01px;font-size:15.4px;color:#6a6a6a;font-weight:normal;font-style:normal;transform:scaleX(1.02);transform-origin:center top;">9/2/2025</div>
<div class="t" style="left:677.00px;width:1000px;text-align:center;top:391.01px;font-size:15.4px;color:#6a6a6a;font-weight:normal;font-style:normal;transform:scaleX(0.841);transform-origin:center top;">TRUE</div>
<div class="t" style="right:372.00px;top:391.01px;font-size:15.4px;color:#6a6a6a;font-weight:normal;font-style:normal;">65</div>
<div class="t" style="right:286.00px;top:391.01px;font-size:15.4px;color:#6a6a6a;font-weight:normal;font-style:normal;">65</div>
<div class="t" style="right:201.00px;top:391.01px;font-size:15.4px;color:#6a6a6a;font-weight:normal;font-style:normal;">0.1</div>
<div class="t" style="left:147.50px;top:413.53px;font-size:15.4px;color:#6a6a6a;font-weight:normal;font-style:normal;transform:scaleX(0.939);transform-origin:left top;">ORD-20250</div>
<div class="t" style="left:235.00px;top:413.53px;font-size:15.4px;color:#6a6a6a;font-weight:normal;font-style:normal;transform:scaleX(0.931);transform-origin:left top;">PICK-202509-310</div>
<div class="t" style="left:360.00px;top:413.53px;font-size:15.4px;color:#6a6a6a;font-weight:normal;font-style:normal;transform:scaleX(0.931);transform-origin:left top;">PRD0023</div>
<div class="t" style="left:634.00px;top:413.53px;font-size:15.4px;color:#6a6a6a;font-weight:normal;font-style:normal;transform:scaleX(0.903);transform-origin:left top;">ZONE-D</div>
<div class="t" style="left:702.00px;top:413.53px;font-size:15.4px;color:#6a6a6a;font-weight:normal;font-style:normal;transform:scaleX(0.949);transform-origin:left top;">EMP0033</div>
<div class="t" style="left:337.50px;width:1000px;text-align:center;top:413.53px;font-size:15.4px;color:#6a6a6a;font-weight:normal;font-style:normal;transform:scaleX(0.841);transform-origin:center top;">TRUE</div>
<div class="t" style="left:421.80px;width:1000px;text-align:center;top:413.53px;font-size:15.4px;color:#6a6a6a;font-weight:normal;font-style:normal;transform:scaleX(1.015);transform-origin:center top;">9/20/2025</div>
<div class="t" style="left:506.30px;width:1000px;text-align:center;top:413.53px;font-size:15.4px;color:#6a6a6a;font-weight:normal;font-style:normal;transform:scaleX(1.03);transform-origin:center top;">9/24/2025</div>
<div class="t" style="left:591.50px;width:1000px;text-align:center;top:413.53px;font-size:15.4px;color:#6a6a6a;font-weight:normal;font-style:normal;transform:scaleX(1.02);transform-origin:center top;">9/26/2025</div>
<div class="t" style="left:677.00px;width:1000px;text-align:center;top:413.53px;font-size:15.4px;color:#6a6a6a;font-weight:normal;font-style:normal;transform:scaleX(0.841);transform-origin:center top;">TRUE</div>
<div class="t" style="right:372.00px;top:413.53px;font-size:15.4px;color:#6a6a6a;font-weight:normal;font-style:normal;">201</div>
<div class="t" style="right:286.00px;top:413.53px;font-size:15.4px;color:#6a6a6a;font-weight:normal;font-style:normal;">201</div>
<div class="t" style="right:201.00px;top:413.53px;font-size:15.4px;color:#6a6a6a;font-weight:normal;font-style:normal;">0.5</div>
<div class="t" style="left:147.50px;top:436.05px;font-size:15.4px;color:#6a6a6a;font-weight:normal;font-style:normal;transform:scaleX(0.939);transform-origin:left top;">ORD-20250</div>
<div class="t" style="left:235.00px;top:436.05px;font-size:15.4px;color:#6a6a6a;font-weight:normal;font-style:normal;transform:scaleX(0.931);transform-origin:left top;">PICK-202509-597</div>
<div class="t" style="left:360.00px;top:436.05px;font-size:15.4px;color:#6a6a6a;font-weight:normal;font-style:normal;transform:scaleX(0.931);transform-origin:left top;">PRD0004</div>
<div class="t" style="left:634.00px;top:436.05px;font-size:15.4px;color:#6a6a6a;font-weight:normal;font-style:normal;transform:scaleX(0.903);transform-origin:left top;">ZONE-A</div>
<div class="t" style="left:702.00px;top:436.05px;font-size:15.4px;color:#6a6a6a;font-weight:normal;font-style:normal;transform:scaleX(0.949);transform-origin:left top;">EMP0063</div>
<div class="t" style="left:337.50px;width:1000px;text-align:center;top:436.05px;font-size:15.4px;color:#6a6a6a;font-weight:normal;font-style:normal;transform:scaleX(0.841);transform-origin:center top;">TRUE</div>
<div class="t" style="left:421.80px;width:1000px;text-align:center;top:436.05px;font-size:15.4px;color:#6a6a6a;font-weight:normal;font-style:normal;transform:scaleX(1.015);transform-origin:center top;">8/31/2025</div>
<div class="t" style="left:506.30px;width:1000px;text-align:center;top:436.05px;font-size:15.4px;color:#6a6a6a;font-weight:normal;font-style:normal;transform:scaleX(1.03);transform-origin:center top;">9/1/2025</div>
<div class="t" style="left:591.50px;width:1000px;text-align:center;top:436.05px;font-size:15.4px;color:#6a6a6a;font-weight:normal;font-style:normal;transform:scaleX(1.02);transform-origin:center top;">9/1/2025</div>
<div class="t" style="left:677.00px;width:1000px;text-align:center;top:436.05px;font-size:15.4px;color:#6a6a6a;font-weight:normal;font-style:normal;transform:scaleX(0.841);transform-origin:center top;">TRUE</div>
<div class="t" style="right:372.00px;top:436.05px;font-size:15.4px;color:#6a6a6a;font-weight:normal;font-style:normal;">25</div>
<div class="t" style="right:286.00px;top:436.05px;font-size:15.4px;color:#6a6a6a;font-weight:normal;font-style:normal;">25</div>
<div class="t" style="right:201.00px;top:436.05px;font-size:15.4px;color:#6a6a6a;font-weight:normal;font-style:normal;">0.1</div>
<div class="t" style="left:147.50px;top:458.57px;font-size:15.4px;color:#6a6a6a;font-weight:normal;font-style:normal;transform:scaleX(0.939);transform-origin:left top;">ORD-20250</div>
<div class="t" style="left:235.00px;top:458.57px;font-size:15.4px;color:#6a6a6a;font-weight:normal;font-style:normal;transform:scaleX(0.931);transform-origin:left top;">PICK-202509-706</div>
<div class="t" style="left:360.00px;top:458.57px;font-size:15.4px;color:#6a6a6a;font-weight:normal;font-style:normal;transform:scaleX(0.931);transform-origin:left top;">PRD0017</div>
<div class="t" style="left:634.00px;top:458.57px;font-size:15.4px;color:#6a6a6a;font-weight:normal;font-style:normal;transform:scaleX(0.903);transform-origin:left top;">ZONE-D</div>
<div class="t" style="left:702.00px;top:458.57px;font-size:15.4px;color:#6a6a6a;font-weight:normal;font-style:normal;transform:scaleX(0.949);transform-origin:left top;">EMP0082</div>
<div class="t" style="left:337.50px;width:1000px;text-align:center;top:458.57px;font-size:15.4px;color:#6a6a6a;font-weight:normal;font-style:normal;transform:scaleX(0.841);transform-origin:center top;">TRUE</div>
<div class="t" style="left:421.80px;width:1000px;text-align:center;top:458.57px;font-size:15.4px;color:#6a6a6a;font-weight:normal;font-style:normal;transform:scaleX(1.015);transform-origin:center top;">9/11/2025</div>
<div class="t" style="left:506.30px;width:1000px;text-align:center;top:458.57px;font-size:15.4px;color:#6a6a6a;font-weight:normal;font-style:normal;transform:scaleX(1.03);transform-origin:center top;">9/12/2025</div>
<div class="t" style="left:591.50px;width:1000px;text-align:center;top:458.57px;font-size:15.4px;color:#6a6a6a;font-weight:normal;font-style:normal;transform:scaleX(1.02);transform-origin:center top;">9/14/2025</div>
<div class="t" style="left:677.00px;width:1000px;text-align:center;top:458.57px;font-size:15.4px;color:#6a6a6a;font-weight:normal;font-style:normal;transform:scaleX(0.841);transform-origin:center top;">TRUE</div>
<div class="t" style="right:372.00px;top:458.57px;font-size:15.4px;color:#6a6a6a;font-weight:normal;font-style:normal;">140</div>
<div class="t" style="right:286.00px;top:458.57px;font-size:15.4px;color:#6a6a6a;font-weight:normal;font-style:normal;">140</div>
<div class="t" style="right:201.00px;top:458.57px;font-size:15.4px;color:#6a6a6a;font-weight:normal;font-style:normal;">0.2</div>
<div class="t" style="left:147.50px;top:481.10px;font-size:15.4px;color:#6a6a6a;font-weight:normal;font-style:normal;transform:scaleX(0.939);transform-origin:left top;">ORD-20250</div>
<div class="t" style="left:235.00px;top:481.10px;font-size:15.4px;color:#6a6a6a;font-weight:normal;font-style:normal;transform:scaleX(0.931);transform-origin:left top;">PICK-202509-233</div>
<div class="t" style="left:360.00px;top:481.10px;font-size:15.4px;color:#6a6a6a;font-weight:normal;font-style:normal;transform:scaleX(0.931);transform-origin:left top;">PRD0007</div>
<div class="t" style="left:634.00px;top:481.10px;font-size:15.4px;color:#6a6a6a;font-weight:normal;font-style:normal;transform:scaleX(0.903);transform-origin:left top;">ZONE-C</div>
<div class="t" style="left:702.00px;top:481.10px;font-size:15.4px;color:#6a6a6a;font-weight:normal;font-style:normal;transform:scaleX(0.949);transform-origin:left top;">EMP0030</div>
<div class="t" style="left:337.50px;width:1000px;text-align:center;top:481.10px;font-size:15.4px;color:#6a6a6a;font-weight:normal;font-style:normal;transform:scaleX(0.841);transform-origin:center top;">TRUE</div>
<div class="t" style="left:421.80px;width:1000px;text-align:center;top:481.10px;font-size:15.4px;color:#6a6a6a;font-weight:normal;font-style:normal;transform:scaleX(1.015);transform-origin:center top;">9/18/2025</div>
<div class="t" style="left:506.30px;width:1000px;text-align:center;top:481.10px;font-size:15.4px;color:#6a6a6a;font-weight:normal;font-style:normal;transform:scaleX(1.03);transform-origin:center top;">9/22/2025</div>
<div class="t" style="left:591.50px;width:1000px;text-align:center;top:481.10px;font-size:15.4px;color:#6a6a6a;font-weight:normal;font-style:normal;transform:scaleX(1.02);transform-origin:center top;">9/24/2025</div>
<div class="t" style="left:677.00px;width:1000px;text-align:center;top:481.10px;font-size:15.4px;color:#6a6a6a;font-weight:normal;font-style:normal;transform:scaleX(0.841);transform-origin:center top;">TRUE</div>
<div class="t" style="right:372.00px;top:481.10px;font-size:15.4px;color:#6a6a6a;font-weight:normal;font-style:normal;">67</div>
<div class="t" style="right:286.00px;top:481.10px;font-size:15.4px;color:#6a6a6a;font-weight:normal;font-style:normal;">67</div>
<div class="t" style="right:201.00px;top:481.10px;font-size:15.4px;color:#6a6a6a;font-weight:normal;font-style:normal;">0.1</div>
<div class="t" style="left:147.50px;top:503.62px;font-size:15.4px;color:#6a6a6a;font-weight:normal;font-style:normal;transform:scaleX(0.939);transform-origin:left top;">ORD-20250</div>
<div class="t" style="left:235.00px;top:503.62px;font-size:15.4px;color:#6a6a6a;font-weight:normal;font-style:normal;transform:scaleX(0.931);transform-origin:left top;">PICK-202509-431</div>
<div class="t" style="left:360.00px;top:503.62px;font-size:15.4px;color:#6a6a6a;font-weight:normal;font-style:normal;transform:scaleX(0.931);transform-origin:left top;">PRD0018</div>
<div class="t" style="left:634.00px;top:503.62px;font-size:15.4px;color:#6a6a6a;font-weight:normal;font-style:normal;transform:scaleX(0.903);transform-origin:left top;">ZONE-A</div>
<div class="t" style="left:702.00px;top:503.62px;font-size:15.4px;color:#6a6a6a;font-weight:normal;font-style:normal;transform:scaleX(0.949);transform-origin:left top;">EMP0026</div>
<div class="t" style="left:337.50px;width:1000px;text-align:center;top:503.62px;font-size:15.4px;color:#6a6a6a;font-weight:normal;font-style:normal;transform:scaleX(0.841);transform-origin:center top;">TRUE</div>
<div class="t" style="left:421.80px;width:1000px;text-align:center;top:503.62px;font-size:15.4px;color:#6a6a6a;font-weight:normal;font-style:normal;transform:scaleX(1.015);transform-origin:center top;">9/3/2025</div>
<div class="t" style="left:506.30px;width:1000px;text-align:center;top:503.62px;font-size:15.4px;color:#6a6a6a;font-weight:normal;font-style:normal;transform:scaleX(1.03);transform-origin:center top;">9/5/2025</div>
<div class="t" style="left:591.50px;width:1000px;text-align:center;top:503.62px;font-size:15.4px;color:#6a6a6a;font-weight:normal;font-style:normal;transform:scaleX(1.02);transform-origin:center top;">9/6/2025</div>
<div class="t" style="left:677.00px;width:1000px;text-align:center;top:503.62px;font-size:15.4px;color:#6a6a6a;font-weight:normal;font-style:normal;transform:scaleX(0.841);transform-origin:center top;">TRUE</div>
<div class="t" style="right:372.00px;top:503.62px;font-size:15.4px;color:#6a6a6a;font-weight:normal;font-style:normal;">4</div>
<div class="t" style="right:286.00px;top:503.62px;font-size:15.4px;color:#6a6a6a;font-weight:normal;font-style:normal;">4</div>
<div class="t" style="right:201.00px;top:503.62px;font-size:15.4px;color:#6a6a6a;font-weight:normal;font-style:normal;">0.0</div>
<div class="t" style="left:147.50px;top:526.14px;font-size:15.4px;color:#6a6a6a;font-weight:normal;font-style:normal;transform:scaleX(0.939);transform-origin:left top;">ORD-20250</div>
<div class="t" style="left:235.00px;top:526.14px;font-size:15.4px;color:#6a6a6a;font-weight:normal;font-style:normal;transform:scaleX(0.931);transform-origin:left top;">PICK-202509-911</div>
<div class="t" style="left:360.00px;top:526.14px;font-size:15.4px;color:#6a6a6a;font-weight:normal;font-style:normal;transform:scaleX(0.931);transform-origin:left top;">PRD0018</div>
<div class="t" style="left:634.00px;top:526.14px;font-size:15.4px;color:#6a6a6a;font-weight:normal;font-style:normal;transform:scaleX(0.903);transform-origin:left top;">ZONE-C</div>
<div class="t" style="left:702.00px;top:526.14px;font-size:15.4px;color:#6a6a6a;font-weight:normal;font-style:normal;transform:scaleX(0.949);transform-origin:left top;">EMP0054</div>
<div class="t" style="left:337.50px;width:1000px;text-align:center;top:526.14px;font-size:15.4px;color:#6a6a6a;font-weight:normal;font-style:normal;transform:scaleX(0.841);transform-origin:center top;">TRUE</div>
<div class="t" style="left:421.80px;width:1000px;text-align:center;top:526.14px;font-size:15.4px;color:#6a6a6a;font-weight:normal;font-style:normal;transform:scaleX(1.015);transform-origin:center top;">9/15/2025</div>
<div class="t" style="left:506.30px;width:1000px;text-align:center;top:526.14px;font-size:15.4px;color:#6a6a6a;font-weight:normal;font-style:normal;transform:scaleX(1.03);transform-origin:center top;">9/15/2025</div>
<div class="t" style="left:591.50px;width:1000px;text-align:center;top:526.14px;font-size:15.4px;color:#6a6a6a;font-weight:normal;font-style:normal;transform:scaleX(1.02);transform-origin:center top;">9/15/2025</div>
<div class="t" style="left:677.00px;width:1000px;text-align:center;top:526.14px;font-size:15.4px;color:#6a6a6a;font-weight:normal;font-style:normal;transform:scaleX(0.841);transform-origin:center top;">TRUE</div>
<div class="t" style="right:372.00px;top:526.14px;font-size:15.4px;color:#6a6a6a;font-weight:normal;font-style:normal;">129</div>
<div class="t" style="right:286.00px;top:526.14px;font-size:15.4px;color:#6a6a6a;font-weight:normal;font-style:normal;">129</div>
<div class="t" style="right:201.00px;top:526.14px;font-size:15.4px;color:#6a6a6a;font-weight:normal;font-style:normal;">0.3</div>
<div class="t" style="left:147.50px;top:548.66px;font-size:15.4px;color:#6a6a6a;font-weight:normal;font-style:normal;transform:scaleX(0.939);transform-origin:left top;">ORD-20250</div>
<div class="t" style="left:235.00px;top:548.66px;font-size:15.4px;color:#6a6a6a;font-weight:normal;font-style:normal;transform:scaleX(0.931);transform-origin:left top;">PICK-202509-420</div>
<div class="t" style="left:360.00px;top:548.66px;font-size:15.4px;color:#6a6a6a;font-weight:normal;font-style:normal;transform:scaleX(0.931);transform-origin:left top;">PRD0006</div>
<div class="t" style="left:634.00px;top:548.66px;font-size:15.4px;color:#6a6a6a;font-weight:normal;font-style:normal;transform:scaleX(0.903);transform-origin:left top;">ZONE-B</div>
<div class="t" style="left:702.00px;top:548.66px;font-size:15.4px;color:#6a6a6a;font-weight:normal;font-style:normal;transform:scaleX(0.949);transform-origin:left top;">EMP0017</div>
<div class="t" style="left:337.50px;width:1000px;text-align:center;top:548.66px;font-size:15.4px;color:#6a6a6a;font-weight:normal;font-style:normal;transform:scaleX(0.841);transform-origin:center top;">TRUE</div>
<div class="t" style="left:421.80px;width:1000px;text-align:center;top:548.66px;font-size:15.4px;color:#6a6a6a;font-weight:normal;font-style:normal;transform:scaleX(1.015);transform-origin:center top;">9/3/2025</div>
<div class="t" style="left:506.30px;width:1000px;text-align:center;top:548.66px;font-size:15.4px;color:#6a6a6a;font-weight:normal;font-style:normal;transform:scaleX(1.03);transform-origin:center top;">9/6/2025</div>
<div class="t" style="left:591.50px;width:1000px;text-align:center;top:548.66px;font-size:15.4px;color:#6a6a6a;font-weight:normal;font-style:normal;transform:scaleX(1.02);transform-origin:center top;">9/6/2025</div>
<div class="t" style="left:677.00px;width:1000px;text-align:center;top:548.66px;font-size:15.4px;color:#6a6a6a;font-weight:normal;font-style:normal;transform:scaleX(0.841);transform-origin:center top;">TRUE</div>
<div class="t" style="left:762.50px;width:1000px;text-align:center;top:548.66px;font-size:15.4px;color:#6a6a6a;font-weight:normal;font-style:normal;">9/7/2025</div>
<div class="t" style="right:372.00px;top:548.66px;font-size:15.4px;color:#6a6a6a;font-weight:normal;font-style:normal;">59</div>
<div class="t" style="right:286.00px;top:548.66px;font-size:15.4px;color:#6a6a6a;font-weight:normal;font-style:normal;">59</div>
<div class="t" style="right:201.00px;top:548.66px;font-size:15.4px;color:#6a6a6a;font-weight:normal;font-style:normal;">0.1</div>
<div class="t" style="left:147.50px;top:571.18px;font-size:15.4px;color:#6a6a6a;font-weight:normal;font-style:normal;transform:scaleX(0.939);transform-origin:left top;">ORD-20250</div>
<div class="t" style="left:235.00px;top:571.18px;font-size:15.4px;color:#6a6a6a;font-weight:normal;font-style:normal;transform:scaleX(0.931);transform-origin:left top;">PICK-202509-419</div>
<div class="t" style="left:360.00px;top:571.18px;font-size:15.4px;color:#6a6a6a;font-weight:normal;font-style:normal;transform:scaleX(0.931);transform-origin:left top;">PRD0001</div>
<div class="t" style="left:634.00px;top:571.18px;font-size:15.4px;color:#6a6a6a;font-weight:normal;font-style:normal;transform:scaleX(0.903);transform-origin:left top;">ZONE-C</div>
<div class="t" style="left:702.00px;top:571.18px;font-size:15.4px;color:#6a6a6a;font-weight:normal;font-style:normal;transform:scaleX(0.949);transform-origin:left top;">EMP0098</div>
<div class="t" style="left:337.50px;width:1000px;text-align:center;top:571.18px;font-size:15.4px;color:#6a6a6a;font-weight:normal;font-style:normal;transform:scaleX(0.841);transform-origin:center top;">TRUE</div>
<div class="t" style="left:421.80px;width:1000px;text-align:center;top:571.18px;font-size:15.4px;color:#6a6a6a;font-weight:normal;font-style:normal;transform:scaleX(1.015);transform-origin:center top;">9/7/2025</div>
<div class="t" style="left:506.30px;width:1000px;text-align:center;top:571.18px;font-size:15.4px;color:#6a6a6a;font-weight:normal;font-style:normal;transform:scaleX(1.03);transform-origin:center top;">9/10/2025</div>
<div class="t" style="left:591.50px;width:1000px;text-align:center;top:571.18px;font-size:15.4px;color:#6a6a6a;font-weight:normal;font-style:normal;transform:scaleX(1.02);transform-origin:center top;">9/11/2025</div>
<div class="t" style="left:677.00px;width:1000px;text-align:center;top:571.18px;font-size:15.4px;color:#6a6a6a;font-weight:normal;font-style:normal;transform:scaleX(0.841);transform-origin:center top;">TRUE</div>
<div class="t" style="left:762.50px;width:1000px;text-align:center;top:571.18px;font-size:15.4px;color:#6a6a6a;font-weight:normal;font-style:normal;">9/14/2025</div>
<div class="t" style="right:372.00px;top:571.18px;font-size:15.4px;color:#6a6a6a;font-weight:normal;font-style:normal;">108</div>
<div class="t" style="right:286.00px;top:571.18px;font-size:15.4px;color:#6a6a6a;font-weight:normal;font-style:normal;">108</div>
<div class="t" style="right:201.00px;top:571.18px;font-size:15.4px;color:#6a6a6a;font-weight:normal;font-style:normal;">0.2</div>
<div class="t" style="left:147.50px;top:593.71px;font-size:15.4px;color:#6a6a6a;font-weight:normal;font-style:normal;transform:scaleX(0.939);transform-origin:left top;">ORD-20250</div>
<div class="t" style="left:235.00px;top:593.71px;font-size:15.4px;color:#6a6a6a;font-weight:normal;font-style:normal;transform:scaleX(0.931);transform-origin:left top;">PICK-202509-114</div>
<div class="t" style="left:360.00px;top:593.71px;font-size:15.4px;color:#6a6a6a;font-weight:normal;font-style:normal;transform:scaleX(0.931);transform-origin:left top;">PRD0001</div>
<div class="t" style="left:634.00px;top:593.71px;font-size:15.4px;color:#6a6a6a;font-weight:normal;font-style:normal;transform:scaleX(0.903);transform-origin:left top;">ZONE-A</div>
<div class="t" style="left:702.00px;top:593.71px;font-size:15.4px;color:#6a6a6a;font-weight:normal;font-style:normal;transform:scaleX(0.949);transform-origin:left top;">EMP0026</div>
<div class="t" style="left:337.50px;width:1000px;text-align:center;top:593.71px;font-size:15.4px;color:#6a6a6a;font-weight:normal;font-style:normal;transform:scaleX(0.841);transform-origin:center top;">TRUE</div>
<div class="t" style="left:421.80px;width:1000px;text-align:center;top:593.71px;font-size:15.4px;color:#6a6a6a;font-weight:normal;font-style:normal;transform:scaleX(1.015);transform-origin:center top;">9/10/2025</div>
<div class="t" style="left:506.30px;width:1000px;text-align:center;top:593.71px;font-size:15.4px;color:#6a6a6a;font-weight:normal;font-style:normal;transform:scaleX(1.03);transform-origin:center top;">9/15/2025</div>
<div class="t" style="left:591.50px;width:1000px;text-align:center;top:593.71px;font-size:15.4px;color:#6a6a6a;font-weight:normal;font-style:normal;transform:scaleX(1.02);transform-origin:center top;">9/15/2025</div>
<div class="t" style="left:677.00px;width:1000px;text-align:center;top:593.71px;font-size:15.4px;color:#6a6a6a;font-weight:normal;font-style:normal;transform:scaleX(0.841);transform-origin:center top;">TRUE</div>
<div class="t" style="right:372.00px;top:593.71px;font-size:15.4px;color:#6a6a6a;font-weight:normal;font-style:normal;">69</div>
<div class="t" style="right:286.00px;top:593.71px;font-size:15.4px;color:#6a6a6a;font-weight:normal;font-style:normal;">69</div>
<div class="t" style="right:201.00px;top:593.71px;font-size:15.4px;color:#6a6a6a;font-weight:normal;font-style:normal;">0.1</div>
<div class="t" style="left:147.50px;top:616.23px;font-size:15.4px;color:#6a6a6a;font-weight:normal;font-style:normal;transform:scaleX(0.939);transform-origin:left top;">ORD-20250</div>
<div class="t" style="left:235.00px;top:616.23px;font-size:15.4px;color:#6a6a6a;font-weight:normal;font-style:normal;transform:scaleX(0.931);transform-origin:left top;">PICK-202509-963</div>
<div class="t" style="left:360.00px;top:616.23px;font-size:15.4px;color:#6a6a6a;font-weight:normal;font-style:normal;transform:scaleX(0.931);transform-origin:left top;">PRD0011</div>
<div class="t" style="left:634.00px;top:616.23px;font-size:15.4px;color:#6a6a6a;font-weight:normal;font-style:normal;transform:scaleX(0.903);transform-origin:left top;">ZONE-B</div>
<div class="t" style="left:702.00px;top:616.23px;font-size:15.4px;color:#6a6a6a;font-weight:normal;font-style:normal;transform:scaleX(0.949);transform-origin:left top;">EMP0096</div>
<div class="t" style="left:337.50px;width:1000px;text-align:center;top:616.23px;font-size:15.4px;color:#6a6a6a;font-weight:normal;font-style:normal;transform:scaleX(0.841);transform-origin:center top;">TRUE</div>
<div class="t" style="left:421.80px;width:1000px;text-align:center;top:616.23px;font-size:15.4px;color:#6a6a6a;font-weight:normal;font-style:normal;transform:scaleX(1.015);transform-origin:center top;">9/17/2025</div>
<div class="t" style="left:506.30px;width:1000px;text-align:center;top:616.23px;font-size:15.4px;color:#6a6a6a;font-weight:normal;font-style:normal;transform:scaleX(1.03);transform-origin:center top;">9/17/2025</div>
<div class="t" style="left:591.50px;width:1000px;text-align:center;top:616.23px;font-size:15.4px;color:#6a6a6a;font-weight:normal;font-style:normal;transform:scaleX(1.02);transform-origin:center top;">9/19/2025</div>
<div class="t" style="left:677.00px;width:1000px;text-align:center;top:616.23px;font-size:15.4px;color:#6a6a6a;font-weight:normal;font-style:normal;transform:scaleX(0.841);transform-origin:center top;">TRUE</div>
<div class="t" style="right:372.00px;top:616.23px;font-size:15.4px;color:#6a6a6a;font-weight:normal;font-style:normal;">461</div>
<div class="t" style="right:286.00px;top:616.23px;font-size:15.4px;color:#6a6a6a;font-weight:normal;font-style:normal;">461</div>
<div class="t" style="right:201.00px;top:616.23px;font-size:15.4px;color:#6a6a6a;font-weight:normal;font-style:normal;">0.6</div>
<div class="t" style="left:147.50px;top:638.75px;font-size:15.4px;color:#6a6a6a;font-weight:normal;font-style:normal;transform:scaleX(0.939);transform-origin:left top;">ORD-20250</div>
<div class="t" style="left:235.00px;top:638.75px;font-size:15.4px;color:#6a6a6a;font-weight:normal;font-style:normal;transform:scaleX(0.931);transform-origin:left top;">PICK-202509-933</div>
<div class="t" style="left:360.00px;top:638.75px;font-size:15.4px;color:#6a6a6a;font-weight:normal;font-style:normal;transform:scaleX(0.931);transform-origin:left top;">PRD0028</div>
<div class="t" style="left:634.00px;top:638.75px;font-size:15.4px;color:#6a6a6a;font-weight:normal;font-style:normal;transform:scaleX(0.903);transform-origin:left top;">ZONE-A</div>
<div class="t" style="left:702.00px;top:638.75px;font-size:15.4px;color:#6a6a6a;font-weight:normal;font-style:normal;transform:scaleX(0.949);transform-origin:left top;">EMP0070</div>
<div class="t" style="left:337.50px;width:1000px;text-align:center;top:638.75px;font-size:15.4px;color:#6a6a6a;font-weight:normal;font-style:normal;transform:scaleX(0.841);transform-origin:center top;">TRUE</div>
<div class="t" style="left:421.80px;width:1000px;text-align:center;top:638.75px;font-size:15.4px;color:#6a6a6a;font-weight:normal;font-style:normal;transform:scaleX(1.015);transform-origin:center top;">9/25/2025</div>
<div class="t" style="left:506.30px;width:1000px;text-align:center;top:638.75px;font-size:15.4px;color:#6a6a6a;font-weight:normal;font-style:normal;transform:scaleX(1.03);transform-origin:center top;">9/25/2025</div>
<div class="t" style="left:591.50px;width:1000px;text-align:center;top:638.75px;font-size:15.4px;color:#6a6a6a;font-weight:normal;font-style:normal;transform:scaleX(1.02);transform-origin:center top;">9/25/2025</div>
<div class="t" style="left:677.00px;width:1000px;text-align:center;top:638.75px;font-size:15.4px;color:#6a6a6a;font-weight:normal;font-style:normal;transform:scaleX(0.841);transform-origin:center top;">TRUE</div>
<div class="t" style="right:372.00px;top:638.75px;font-size:15.4px;color:#6a6a6a;font-weight:normal;font-style:normal;">2,892</div>
<div class="t" style="right:286.00px;top:638.75px;font-size:15.4px;color:#6a6a6a;font-weight:normal;font-style:normal;">2,892</div>
<div class="t" style="right:201.00px;top:638.75px;font-size:15.4px;color:#6a6a6a;font-weight:normal;font-style:normal;">4.2</div>
<div class="t" style="left:147.50px;top:661.27px;font-size:15.4px;color:#6a6a6a;font-weight:normal;font-style:normal;transform:scaleX(0.939);transform-origin:left top;">ORD-20250</div>
<div class="t" style="left:235.00px;top:661.27px;font-size:15.4px;color:#6a6a6a;font-weight:normal;font-style:normal;transform:scaleX(0.931);transform-origin:left top;">PICK-202509-903</div>
<div class="t" style="left:360.00px;top:661.27px;font-size:15.4px;color:#6a6a6a;font-weight:normal;font-style:normal;transform:scaleX(0.931);transform-origin:left top;">PRD0016</div>
<div class="t" style="left:634.00px;top:661.27px;font-size:15.4px;color:#6a6a6a;font-weight:normal;font-style:normal;transform:scaleX(0.903);transform-origin:left top;">ZONE-A</div>
<div class="t" style="left:702.00px;top:661.27px;font-size:15.4px;color:#6a6a6a;font-weight:normal;font-style:normal;transform:scaleX(0.949);transform-origin:left top;">EMP0079</div>
<div class="t" style="left:337.50px;width:1000px;text-align:center;top:661.27px;font-size:15.4px;color:#6a6a6a;font-weight:normal;font-style:normal;transform:scaleX(0.841);transform-origin:center top;">TRUE</div>
<div class="t" style="left:421.80px;width:1000px;text-align:center;top:661.27px;font-size:15.4px;color:#6a6a6a;font-weight:normal;font-style:normal;transform:scaleX(1.015);transform-origin:center top;">9/8/2025</div>
<div class="t" style="left:506.30px;width:1000px;text-align:center;top:661.27px;font-size:15.4px;color:#6a6a6a;font-weight:normal;font-style:normal;transform:scaleX(1.03);transform-origin:center top;">9/11/2025</div>
<div class="t" style="left:591.50px;width:1000px;text-align:center;top:661.27px;font-size:15.4px;color:#6a6a6a;font-weight:normal;font-style:normal;transform:scaleX(1.02);transform-origin:center top;">9/13/2025</div>
<div class="t" style="left:677.00px;width:1000px;text-align:center;top:661.27px;font-size:15.4px;color:#6a6a6a;font-weight:normal;font-style:normal;transform:scaleX(0.841);transform-origin:center top;">TRUE</div>
<div class="t" style="right:372.00px;top:661.27px;font-size:15.4px;color:#6a6a6a;font-weight:normal;font-style:normal;">61</div>
<div class="t" style="right:286.00px;top:661.27px;font-size:15.4px;color:#6a6a6a;font-weight:normal;font-style:normal;">61</div>
<div class="t" style="right:201.00px;top:661.27px;font-size:15.4px;color:#6a6a6a;font-weight:normal;font-style:normal;">0.1</div>
<div class="t" style="left:147.50px;top:683.79px;font-size:15.4px;color:#6a6a6a;font-weight:normal;font-style:normal;transform:scaleX(0.939);transform-origin:left top;">ORD-20250</div>
<div class="t" style="left:235.00px;top:683.79px;font-size:15.4px;color:#6a6a6a;font-weight:normal;font-style:normal;transform:scaleX(0.931);transform-origin:left top;">PICK-202509-402</div>
<div class="t" style="left:360.00px;top:683.79px;font-size:15.4px;color:#6a6a6a;font-weight:normal;font-style:normal;transform:scaleX(0.931);transform-origin:left top;">PRD0026</div>
<div class="t" style="left:634.00px;top:683.79px;font-size:15.4px;color:#6a6a6a;font-weight:normal;font-style:normal;transform:scaleX(0.903);transform-origin:left top;">ZONE-A</div>
<div class="t" style="left:702.00px;top:683.79px;font-size:15.4px;color:#6a6a6a;font-weight:normal;font-style:normal;transform:scaleX(0.949);transform-origin:left top;">EMP0015</div>
<div class="t" style="left:337.50px;width:1000px;text-align:center;top:683.79px;font-size:15.4px;color:#6a6a6a;font-weight:normal;font-style:normal;transform:scaleX(0.841);transform-origin:center top;">TRUE</div>
<div class="t" style="left:421.80px;width:1000px;text-align:center;top:683.79px;font-size:15.4px;color:#6a6a6a;font-weight:normal;font-style:normal;transform:scaleX(1.015);transform-origin:center top;">9/8/2025</div>
<div class="t" style="left:506.30px;width:1000px;text-align:center;top:683.79px;font-size:15.4px;color:#6a6a6a;font-weight:normal;font-style:normal;transform:scaleX(1.03);transform-origin:center top;">9/10/2025</div>
<div class="t" style="left:591.50px;width:1000px;text-align:center;top:683.79px;font-size:15.4px;color:#6a6a6a;font-weight:normal;font-style:normal;transform:scaleX(1.02);transform-origin:center top;">9/12/2025</div>
<div class="t" style="left:677.00px;width:1000px;text-align:center;top:683.79px;font-size:15.4px;color:#6a6a6a;font-weight:normal;font-style:normal;transform:scaleX(0.841);transform-origin:center top;">TRUE</div>
<div class="t" style="right:372.00px;top:683.79px;font-size:15.4px;color:#6a6a6a;font-weight:normal;font-style:normal;">325</div>
<div class="t" style="right:286.00px;top:683.79px;font-size:15.4px;color:#6a6a6a;font-weight:normal;font-style:normal;">325</div>
<div class="t" style="right:201.00px;top:683.79px;font-size:15.4px;color:#6a6a6a;font-weight:normal;font-style:normal;">0.8</div>
<div class="t" style="left:147.50px;top:706.32px;font-size:15.4px;color:#6a6a6a;font-weight:normal;font-style:normal;transform:scaleX(0.939);transform-origin:left top;">ORD-20250</div>
<div class="t" style="left:235.00px;top:706.32px;font-size:15.4px;color:#6a6a6a;font-weight:normal;font-style:normal;transform:scaleX(0.931);transform-origin:left top;">PICK-202509-574</div>
<div class="t" style="left:360.00px;top:706.32px;font-size:15.4px;color:#6a6a6a;font-weight:normal;font-style:normal;transform:scaleX(0.931);transform-origin:left top;">PRD0016</div>
<div class="t" style="left:634.00px;top:706.32px;font-size:15.4px;color:#6a6a6a;font-weight:normal;font-style:normal;transform:scaleX(0.903);transform-origin:left top;">ZONE-B</div>
<div class="t" style="left:702.00px;top:706.32px;font-size:15.4px;color:#6a6a6a;font-weight:normal;font-style:normal;transform:scaleX(0.949);transform-origin:left top;">EMP0015</div>
<div class="t" style="left:337.50px;width:1000px;text-align:center;top:706.32px;font-size:15.4px;color:#6a6a6a;font-weight:normal;font-style:normal;transform:scaleX(0.841);transform-origin:center top;">TRUE</div>
<div class="t" style="left:421.80px;width:1000px;text-align:center;top:706.32px;font-size:15.4px;color:#6a6a6a;font-weight:normal;font-style:normal;transform:scaleX(1.015);transform-origin:center top;">9/4/2025</div>
<div class="t" style="left:506.30px;width:1000px;text-align:center;top:706.32px;font-size:15.4px;color:#6a6a6a;font-weight:normal;font-style:normal;transform:scaleX(1.03);transform-origin:center top;">9/7/2025</div>
<div class="t" style="left:591.50px;width:1000px;text-align:center;top:706.32px;font-size:15.4px;color:#6a6a6a;font-weight:normal;font-style:normal;transform:scaleX(1.02);transform-origin:center top;">9/7/2025</div>
<div class="t" style="left:677.00px;width:1000px;text-align:center;top:706.32px;font-size:15.4px;color:#6a6a6a;font-weight:normal;font-style:normal;transform:scaleX(0.841);transform-origin:center top;">TRUE</div>
<div class="t" style="right:372.00px;top:706.32px;font-size:15.4px;color:#6a6a6a;font-weight:normal;font-style:normal;">2</div>
<div class="t" style="right:286.00px;top:706.32px;font-size:15.4px;color:#6a6a6a;font-weight:normal;font-style:normal;">2</div>
<div class="t" style="right:217.00px;top:706.32px;font-size:15.4px;color:#6a6a6a;font-weight:normal;font-style:normal;">-</div>
<div class="t" style="left:147.50px;top:728.84px;font-size:15.4px;color:#6a6a6a;font-weight:normal;font-style:normal;transform:scaleX(0.939);transform-origin:left top;">ORD-20250</div>
<div class="t" style="left:235.00px;top:728.84px;font-size:15.4px;color:#6a6a6a;font-weight:normal;font-style:normal;transform:scaleX(0.931);transform-origin:left top;">PICK-202509-456</div>
<div class="t" style="left:360.00px;top:728.84px;font-size:15.4px;color:#6a6a6a;font-weight:normal;font-style:normal;transform:scaleX(0.931);transform-origin:left top;">PRD0015</div>
<div class="t" style="left:634.00px;top:728.84px;font-size:15.4px;color:#6a6a6a;font-weight:normal;font-style:normal;transform:scaleX(0.903);transform-origin:left top;">ZONE-C</div>
<div class="t" style="left:702.00px;top:728.84px;font-size:15.4px;color:#6a6a6a;font-weight:normal;font-style:normal;transform:scaleX(0.949);transform-origin:left top;">EMP0077</div>
<div class="t" style="left:337.50px;width:1000px;text-align:center;top:728.84px;font-size:15.4px;color:#6a6a6a;font-weight:normal;font-style:normal;transform:scaleX(0.841);transform-origin:center top;">TRUE</div>
<div class="t" style="left:421.80px;width:1000px;text-align:center;top:728.84px;font-size:15.4px;color:#6a6a6a;font-weight:normal;font-style:normal;transform:scaleX(1.015);transform-origin:center top;">9/27/2025</div>
<div class="t" style="left:506.30px;width:1000px;text-align:center;top:728.84px;font-size:15.4px;color:#6a6a6a;font-weight:normal;font-style:normal;transform:scaleX(1.03);transform-origin:center top;">9/30/2025</div>
<div class="t" style="left:591.50px;width:1000px;text-align:center;top:728.84px;font-size:15.4px;color:#6a6a6a;font-weight:normal;font-style:normal;transform:scaleX(1.02);transform-origin:center top;">10/1/2025</div>
<div class="t" style="left:677.00px;width:1000px;text-align:center;top:728.84px;font-size:15.4px;color:#6a6a6a;font-weight:normal;font-style:normal;transform:scaleX(0.841);transform-origin:center top;">TRUE</div>
<div class="t" style="right:372.00px;top:728.84px;font-size:15.4px;color:#6a6a6a;font-weight:normal;font-style:normal;">129</div>
<div class="t" style="right:286.00px;top:728.84px;font-size:15.4px;color:#6a6a6a;font-weight:normal;font-style:normal;">129</div>
<div class="t" style="right:201.00px;top:728.84px;font-size:15.4px;color:#6a6a6a;font-weight:normal;font-style:normal;">0.3</div>
<div class="t" style="left:147.50px;top:751.36px;font-size:15.4px;color:#6a6a6a;font-weight:normal;font-style:normal;transform:scaleX(0.939);transform-origin:left top;">ORD-20250</div>
<div class="t" style="left:235.00px;top:751.36px;font-size:15.4px;color:#6a6a6a;font-weight:normal;font-style:normal;transform:scaleX(0.931);transform-origin:left top;">PICK-202509-583</div>
<div class="t" style="left:360.00px;top:751.36px;font-size:15.4px;color:#6a6a6a;font-weight:normal;font-style:normal;transform:scaleX(0.931);transform-origin:left top;">PRD0013</div>
<div class="t" style="left:634.00px;top:751.36px;font-size:15.4px;color:#6a6a6a;font-weight:normal;font-style:normal;transform:scaleX(0.903);transform-origin:left top;">ZONE-A</div>
<div class="t" style="left:702.00px;top:751.36px;font-size:15.4px;color:#6a6a6a;font-weight:normal;font-style:normal;transform:scaleX(0.949);transform-origin:left top;">EMP0035</div>
<div class="t" style="left:337.50px;width:1000px;text-align:center;top:751.36px;font-size:15.4px;color:#6a6a6a;font-weight:normal;font-style:normal;transform:scaleX(0.841);transform-origin:center top;">TRUE</div>
<div class="t" style="left:421.80px;width:1000px;text-align:center;top:751.36px;font-size:15.4px;color:#6a6a6a;font-weight:normal;font-style:normal;transform:scaleX(1.015);transform-origin:center top;">9/10/2025</div>
<div class="t" style="left:506.30px;width:1000px;text-align:center;top:751.36px;font-size:15.4px;color:#6a6a6a;font-weight:normal;font-style:normal;transform:scaleX(1.03);transform-origin:center top;">9/11/2025</div>
<div class="t" style="left:591.50px;width:1000px;text-align:center;top:751.36px;font-size:15.4px;color:#6a6a6a;font-weight:normal;font-style:normal;transform:scaleX(1.02);transform-origin:center top;">9/12/2025</div>
<div class="t" style="left:677.00px;width:1000px;text-align:center;top:751.36px;font-size:15.4px;color:#6a6a6a;font-weight:normal;font-style:normal;transform:scaleX(0.841);transform-origin:center top;">FALSE</div>
<div class="t" style="right:372.00px;top:751.36px;font-size:15.4px;color:#6a6a6a;font-weight:normal;font-style:normal;">23</div>
<div class="t" style="right:286.00px;top:751.36px;font-size:15.4px;color:#6a6a6a;font-weight:normal;font-style:normal;">23</div>
<div class="t" style="right:201.00px;top:751.36px;font-size:15.4px;color:#6a6a6a;font-weight:normal;font-style:normal;">0.1</div>
<div class="t" style="left:147.50px;top:773.88px;font-size:15.4px;color:#6a6a6a;font-weight:normal;font-style:normal;transform:scaleX(0.939);transform-origin:left top;">ORD-20250</div>
<div class="t" style="left:235.00px;top:773.88px;font-size:15.4px;color:#6a6a6a;font-weight:normal;font-style:normal;transform:scaleX(0.931);transform-origin:left top;">PICK-202509-719</div>
<div class="t" style="left:360.00px;top:773.88px;font-size:15.4px;color:#6a6a6a;font-weight:normal;font-style:normal;transform:scaleX(0.931);transform-origin:left top;">PRD0006</div>
<div class="t" style="left:634.00px;top:773.88px;font-size:15.4px;color:#6a6a6a;font-weight:normal;font-style:normal;transform:scaleX(0.903);transform-origin:left top;">ZONE-D</div>
<div class="t" style="left:702.00px;top:773.88px;font-size:15.4px;color:#6a6a6a;font-weight:normal;font-style:normal;transform:scaleX(0.949);transform-origin:left top;">EMP0070</div>
<div class="t" style="left:337.50px;width:1000px;text-align:center;top:773.88px;font-size:15.4px;color:#6a6a6a;font-weight:normal;font-style:normal;transform:scaleX(0.841);transform-origin:center top;">TRUE</div>
<div class="t" style="left:421.80px;width:1000px;text-align:center;top:773.88px;font-size:15.4px;color:#6a6a6a;font-weight:normal;font-style:normal;transform:scaleX(1.015);transform-origin:center top;">9/16/2025</div>
<div class="t" style="left:506.30px;width:1000px;text-align:center;top:773.88px;font-size:15.4px;color:#6a6a6a;font-weight:normal;font-style:normal;transform:scaleX(1.03);transform-origin:center top;">9/17/2025</div>
<div class="t" style="left:591.50px;width:1000px;text-align:center;top:773.88px;font-size:15.4px;color:#6a6a6a;font-weight:normal;font-style:normal;transform:scaleX(1.02);transform-origin:center top;">9/17/2025</div>
<div class="t" style="left:677.00px;width:1000px;text-align:center;top:773.88px;font-size:15.4px;color:#6a6a6a;font-weight:normal;font-style:normal;transform:scaleX(0.841);transform-origin:center top;">TRUE</div>
<div class="t" style="right:372.00px;top:773.88px;font-size:15.4px;color:#6a6a6a;font-weight:normal;font-style:normal;">24</div>
<div class="t" style="right:286.00px;top:773.88px;font-size:15.4px;color:#6a6a6a;font-weight:normal;font-style:normal;">24</div>
<div class="t" style="right:201.00px;top:773.88px;font-size:15.4px;color:#6a6a6a;font-weight:normal;font-style:normal;">0.1</div>
<div class="t" style="left:147.50px;top:796.40px;font-size:15.4px;color:#6a6a6a;font-weight:normal;font-style:normal;transform:scaleX(0.939);transform-origin:left top;">ORD-20250</div>
<div class="t" style="left:235.00px;top:796.40px;font-size:15.4px;color:#6a6a6a;font-weight:normal;font-style:normal;transform:scaleX(0.931);transform-origin:left top;">PICK-202509-474</div>
<div class="t" style="left:360.00px;top:796.40px;font-size:15.4px;color:#6a6a6a;font-weight:normal;font-style:normal;transform:scaleX(0.931);transform-origin:left top;">PRD0022</div>
<div class="t" style="left:634.00px;top:796.40px;font-size:15.4px;color:#6a6a6a;font-weight:normal;font-style:normal;transform:scaleX(0.903);transform-origin:left top;">ZONE-B</div>
<div class="t" style="left:702.00px;top:796.40px;font-size:15.4px;color:#6a6a6a;font-weight:normal;font-style:normal;transform:scaleX(0.949);transform-origin:left top;">EMP0061</div>
<div class="t" style="left:337.50px;width:1000px;text-align:center;top:796.40px;font-size:15.4px;color:#6a6a6a;font-weight:normal;font-style:normal;transform:scaleX(0.841);transform-origin:center top;">TRUE</div>
<div class="t" style="left:421.80px;width:1000px;text-align:center;top:796.40px;font-size:15.4px;color:#6a6a6a;font-weight:normal;font-style:normal;transform:scaleX(1.015);transform-origin:center top;">9/21/2025</div>
<div class="t" style="left:506.30px;width:1000px;text-align:center;top:796.40px;font-size:15.4px;color:#6a6a6a;font-weight:normal;font-style:normal;transform:scaleX(1.03);transform-origin:center top;">9/22/2025</div>
<div class="t" style="left:591.50px;width:1000px;text-align:center;top:796.40px;font-size:15.4px;color:#6a6a6a;font-weight:normal;font-style:normal;transform:scaleX(1.02);transform-origin:center top;">9/24/2025</div>
<div class="t" style="left:677.00px;width:1000px;text-align:center;top:796.40px;font-size:15.4px;color:#6a6a6a;font-weight:normal;font-style:normal;transform:scaleX(0.841);transform-origin:center top;">TRUE</div>
<div class="t" style="right:372.00px;top:796.40px;font-size:15.4px;color:#6a6a6a;font-weight:normal;font-style:normal;">438</div>
<div class="t" style="right:286.00px;top:796.40px;font-size:15.4px;color:#6a6a6a;font-weight:normal;font-style:normal;">438</div>
<div class="t" style="right:201.00px;top:796.40px;font-size:15.4px;color:#6a6a6a;font-weight:normal;font-style:normal;">0.7</div>
<div class="t" style="left:147.50px;top:818.93px;font-size:15.4px;color:#6a6a6a;font-weight:normal;font-style:normal;transform:scaleX(0.939);transform-origin:left top;">ORD-20250</div>
<div class="t" style="left:235.00px;top:818.93px;font-size:15.4px;color:#6a6a6a;font-weight:normal;font-style:normal;transform:scaleX(0.931);transform-origin:left top;">PICK-202509-353</div>
<div class="t" style="left:360.00px;top:818.93px;font-size:15.4px;color:#6a6a6a;font-weight:normal;font-style:normal;transform:scaleX(0.931);transform-origin:left top;">PRD0025</div>
<div class="t" style="left:634.00px;top:818.93px;font-size:15.4px;color:#6a6a6a;font-weight:normal;font-style:normal;transform:scaleX(0.903);transform-origin:left top;">ZONE-C</div>
<div class="t" style="left:702.00px;top:818.93px;font-size:15.4px;color:#6a6a6a;font-weight:normal;font-style:normal;transform:scaleX(0.949);transform-origin:left top;">EMP0070</div>
<div class="t" style="left:337.50px;width:1000px;text-align:center;top:818.93px;font-size:15.4px;color:#6a6a6a;font-weight:normal;font-style:normal;transform:scaleX(0.841);transform-origin:center top;">TRUE</div>
<div class="t" style="left:421.80px;width:1000px;text-align:center;top:818.93px;font-size:15.4px;color:#6a6a6a;font-weight:normal;font-style:normal;transform:scaleX(1.015);transform-origin:center top;">9/19/2025</div>
<div class="t" style="left:506.30px;width:1000px;text-align:center;top:818.93px;font-size:15.4px;color:#6a6a6a;font-weight:normal;font-style:normal;transform:scaleX(1.03);transform-origin:center top;">9/21/2025</div>
<div class="t" style="left:591.50px;width:1000px;text-align:center;top:818.93px;font-size:15.4px;color:#6a6a6a;font-weight:normal;font-style:normal;transform:scaleX(1.02);transform-origin:center top;">9/22/2025</div>
<div class="t" style="left:677.00px;width:1000px;text-align:center;top:818.93px;font-size:15.4px;color:#6a6a6a;font-weight:normal;font-style:normal;transform:scaleX(0.841);transform-origin:center top;">TRUE</div>
<div class="t" style="right:372.00px;top:818.93px;font-size:15.4px;color:#6a6a6a;font-weight:normal;font-style:normal;">183</div>
<div class="t" style="right:286.00px;top:818.93px;font-size:15.4px;color:#6a6a6a;font-weight:normal;font-style:normal;">183</div>
<div class="t" style="right:201.00px;top:818.93px;font-size:15.4px;color:#6a6a6a;font-weight:normal;font-style:normal;">0.5</div>
<div class="t" style="left:147.50px;top:841.45px;font-size:15.4px;color:#6a6a6a;font-weight:normal;font-style:normal;transform:scaleX(0.939);transform-origin:left top;">ORD-20250</div>
<div class="t" style="left:235.00px;top:841.45px;font-size:15.4px;color:#6a6a6a;font-weight:normal;font-style:normal;transform:scaleX(0.931);transform-origin:left top;">PICK-202509-453</div>
<div class="t" style="left:360.00px;top:841.45px;font-size:15.4px;color:#6a6a6a;font-weight:normal;font-style:normal;transform:scaleX(0.931);transform-origin:left top;">PRD0017</div>
<div class="t" style="left:634.00px;top:841.45px;font-size:15.4px;color:#6a6a6a;font-weight:normal;font-style:normal;transform:scaleX(0.903);transform-origin:left top;">ZONE-D</div>
<div class="t" style="left:702.00px;top:841.45px;font-size:15.4px;color:#6a6a6a;font-weight:normal;font-style:normal;transform:scaleX(0.949);transform-origin:left top;">EMP0070</div>
<div class="t" style="left:337.50px;width:1000px;text-align:center;top:841.45px;font-size:15.4px;color:#6a6a6a;font-weight:normal;font-style:normal;transform:scaleX(0.841);transform-origin:center top;">FALSE</div>
<div class="t" style="left:421.80px;width:1000px;text-align:center;top:841.45px;font-size:15.4px;color:#6a6a6a;font-weight:normal;font-style:normal;transform:scaleX(1.015);transform-origin:center top;">9/24/2025</div>
<div class="t" style="left:506.30px;width:1000px;text-align:center;top:841.45px;font-size:15.4px;color:#6a6a6a;font-weight:normal;font-style:normal;transform:scaleX(1.03);transform-origin:center top;">9/28/2025</div>
<div class="t" style="left:591.50px;width:1000px;text-align:center;top:841.45px;font-size:15.4px;color:#6a6a6a;font-weight:normal;font-style:normal;transform:scaleX(1.02);transform-origin:center top;">9/28/2025</div>
<div class="t" style="left:677.00px;width:1000px;text-align:center;top:841.45px;font-size:15.4px;color:#6a6a6a;font-weight:normal;font-style:normal;transform:scaleX(0.841);transform-origin:center top;">FALSE</div>
<div class="t" style="right:372.00px;top:841.45px;font-size:15.4px;color:#6a6a6a;font-weight:normal;font-style:normal;">171</div>
<div class="t" style="right:286.00px;top:841.45px;font-size:15.4px;color:#6a6a6a;font-weight:normal;font-style:normal;">171</div>
<div class="t" style="right:201.00px;top:841.45px;font-size:15.4px;color:#6a6a6a;font-weight:normal;font-style:normal;">0.2</div>
<div class="t" style="left:147.50px;top:863.97px;font-size:15.4px;color:#6a6a6a;font-weight:normal;font-style:normal;transform:scaleX(0.939);transform-origin:left top;">ORD-20250</div>
<div class="t" style="left:235.00px;top:863.97px;font-size:15.4px;color:#6a6a6a;font-weight:normal;font-style:normal;transform:scaleX(0.931);transform-origin:left top;">PICK-202509-949</div>
<div class="t" style="left:360.00px;top:863.97px;font-size:15.4px;color:#6a6a6a;font-weight:normal;font-style:normal;transform:scaleX(0.931);transform-origin:left top;">PRD0019</div>
<div class="t" style="left:634.00px;top:863.97px;font-size:15.4px;color:#6a6a6a;font-weight:normal;font-style:normal;transform:scaleX(0.903);transform-origin:left top;">ZONE-C</div>
<div class="t" style="left:702.00px;top:863.97px;font-size:15.4px;color:#6a6a6a;font-weight:normal;font-style:normal;transform:scaleX(0.949);transform-origin:left top;">EMP0017</div>
<div class="t" style="left:337.50px;width:1000px;text-align:center;top:863.97px;font-size:15.4px;color:#6a6a6a;font-weight:normal;font-style:normal;transform:scaleX(0.841);transform-origin:center top;">TRUE</div>
<div class="t" style="left:421.80px;width:1000px;text-align:center;top:863.97px;font-size:15.4px;color:#6a6a6a;font-weight:normal;font-style:normal;transform:scaleX(1.015);transform-origin:center top;">9/6/2025</div>
<div class="t" style="left:506.30px;width:1000px;text-align:center;top:863.97px;font-size:15.4px;color:#6a6a6a;font-weight:normal;font-style:normal;transform:scaleX(1.03);transform-origin:center top;">9/9/2025</div>
<div class="t" style="left:591.50px;width:1000px;text-align:center;top:863.97px;font-size:15.4px;color:#6a6a6a;font-weight:normal;font-style:normal;transform:scaleX(1.02);transform-origin:center top;">9/11/2025</div>
<div class="t" style="left:677.00px;width:1000px;text-align:center;top:863.97px;font-size:15.4px;color:#6a6a6a;font-weight:normal;font-style:normal;transform:scaleX(0.841);transform-origin:center top;">TRUE</div>
<div class="t" style="right:372.00px;top:863.97px;font-size:15.4px;color:#6a6a6a;font-weight:normal;font-style:normal;">13</div>
<div class="t" style="right:286.00px;top:863.97px;font-size:15.4px;color:#6a6a6a;font-weight:normal;font-style:normal;">13</div>
<div class="t" style="right:201.00px;top:863.97px;font-size:15.4px;color:#6a6a6a;font-weight:normal;font-style:normal;">0.0</div>
<div class="t" style="left:147.50px;top:886.49px;font-size:15.4px;color:#6a6a6a;font-weight:normal;font-style:normal;transform:scaleX(0.939);transform-origin:left top;">ORD-20250</div>
<div class="t" style="left:235.00px;top:886.49px;font-size:15.4px;color:#6a6a6a;font-weight:normal;font-style:normal;transform:scaleX(0.931);transform-origin:left top;">PICK-202509-676</div>
<div class="t" style="left:360.00px;top:886.49px;font-size:15.4px;color:#6a6a6a;font-weight:normal;font-style:normal;transform:scaleX(0.931);transform-origin:left top;">PRD0001</div>
<div class="t" style="left:634.00px;top:886.49px;font-size:15.4px;color:#6a6a6a;font-weight:normal;font-style:normal;transform:scaleX(0.903);transform-origin:left top;">ZONE-B</div>
<div class="t" style="left:702.00px;top:886.49px;font-size:15.4px;color:#6a6a6a;font-weight:normal;font-style:normal;transform:scaleX(0.949);transform-origin:left top;">EMP0035</div>
<div class="t" style="left:337.50px;width:1000px;text-align:center;top:886.49px;font-size:15.4px;color:#6a6a6a;font-weight:normal;font-style:normal;transform:scaleX(0.841);transform-origin:center top;">TRUE</div>
<div class="t" style="left:421.80px;width:1000px;text-align:center;top:886.49px;font-size:15.4px;color:#6a6a6a;font-weight:normal;font-style:normal;transform:scaleX(1.015);transform-origin:center top;">9/5/2025</div>
<div class="t" style="left:506.30px;width:1000px;text-align:center;top:886.49px;font-size:15.4px;color:#6a6a6a;font-weight:normal;font-style:normal;transform:scaleX(1.03);transform-origin:center top;">9/7/2025</div>
<div class="t" style="left:591.50px;width:1000px;text-align:center;top:886.49px;font-size:15.4px;color:#6a6a6a;font-weight:normal;font-style:normal;transform:scaleX(1.02);transform-origin:center top;">9/9/2025</div>
<div class="t" style="left:677.00px;width:1000px;text-align:center;top:886.49px;font-size:15.4px;color:#6a6a6a;font-weight:normal;font-style:normal;transform:scaleX(0.841);transform-origin:center top;">TRUE</div>
<div class="t" style="right:372.00px;top:886.49px;font-size:15.4px;color:#6a6a6a;font-weight:normal;font-style:normal;">141</div>
<div class="t" style="right:286.00px;top:886.49px;font-size:15.4px;color:#6a6a6a;font-weight:normal;font-style:normal;">141</div>
<div class="t" style="right:201.00px;top:886.49px;font-size:15.4px;color:#6a6a6a;font-weight:normal;font-style:normal;">0.3</div>
<div class="t" style="left:147.50px;top:909.01px;font-size:15.4px;color:#6a6a6a;font-weight:normal;font-style:normal;transform:scaleX(0.939);transform-origin:left top;">ORD-20250</div>
<div class="t" style="left:235.00px;top:909.01px;font-size:15.4px;color:#6a6a6a;font-weight:normal;font-style:normal;transform:scaleX(0.931);transform-origin:left top;">PICK-202509-759</div>
<div class="t" style="left:360.00px;top:909.01px;font-size:15.4px;color:#6a6a6a;font-weight:normal;font-style:normal;transform:scaleX(0.931);transform-origin:left top;">PRD0002</div>
<div class="t" style="left:634.00px;top:909.01px;font-size:15.4px;color:#6a6a6a;font-weight:normal;font-style:normal;transform:scaleX(0.903);transform-origin:left top;">ZONE-B</div>
<div class="t" style="left:702.00px;top:909.01px;font-size:15.4px;color:#6a6a6a;font-weight:normal;font-style:normal;transform:scaleX(0.949);transform-origin:left top;">EMP0015</div>
<div class="t" style="left:337.50px;width:1000px;text-align:center;top:909.01px;font-size:15.4px;color:#6a6a6a;font-weight:normal;font-style:normal;transform:scaleX(0.841);transform-origin:center top;">TRUE</div>
<div class="t" style="left:421.80px;width:1000px;text-align:center;top:909.01px;font-size:15.4px;color:#6a6a6a;font-weight:normal;font-style:normal;transform:scaleX(1.015);transform-origin:center top;">8/31/2025</div>
<div class="t" style="left:506.30px;width:1000px;text-align:center;top:909.01px;font-size:15.4px;color:#6a6a6a;font-weight:normal;font-style:normal;transform:scaleX(1.03);transform-origin:center top;">9/2/2025</div>
<div class="t" style="left:591.50px;width:1000px;text-align:center;top:909.01px;font-size:15.4px;color:#6a6a6a;font-weight:normal;font-style:normal;transform:scaleX(1.02);transform-origin:center top;">9/4/2025</div>
<div class="t" style="left:677.00px;width:1000px;text-align:center;top:909.01px;font-size:15.4px;color:#6a6a6a;font-weight:normal;font-style:normal;transform:scaleX(0.841);transform-origin:center top;">TRUE</div>
<div class="t" style="right:372.00px;top:909.01px;font-size:15.4px;color:#6a6a6a;font-weight:normal;font-style:normal;">372</div>
<div class="t" style="right:286.00px;top:909.01px;font-size:15.4px;color:#6a6a6a;font-weight:normal;font-style:normal;">372</div>
<div class="t" style="right:201.00px;top:909.01px;font-size:15.4px;color:#6a6a6a;font-weight:normal;font-style:normal;">0.8</div>
<div class="t" style="left:147.50px;top:931.54px;font-size:15.4px;color:#6a6a6a;font-weight:normal;font-style:normal;transform:scaleX(0.939);transform-origin:left top;">ORD-20250</div>
<div class="t" style="left:235.00px;top:931.54px;font-size:15.4px;color:#6a6a6a;font-weight:normal;font-style:normal;transform:scaleX(0.931);transform-origin:left top;">PICK-202509-292</div>
<div class="t" style="left:360.00px;top:931.54px;font-size:15.4px;color:#6a6a6a;font-weight:normal;font-style:normal;transform:scaleX(0.931);transform-origin:left top;">PRD0007</div>
<div class="t" style="left:634.00px;top:931.54px;font-size:15.4px;color:#6a6a6a;font-weight:normal;font-style:normal;transform:scaleX(0.903);transform-origin:left top;">ZONE-B</div>
<div class="t" style="left:702.00px;top:931.54px;font-size:15.4px;color:#6a6a6a;font-weight:normal;font-style:normal;transform:scaleX(0.949);transform-origin:left top;">EMP0034</div>
<div class="t" style="left:337.50px;width:1000px;text-align:center;top:931.54px;font-size:15.4px;color:#6a6a6a;font-weight:normal;font-style:normal;transform:scaleX(0.841);transform-origin:center top;">TRUE</div>
<div class="t" style="left:421.80px;width:1000px;text-align:center;top:931.54px;font-size:15.4px;color:#6a6a6a;font-weight:normal;font-style:normal;transform:scaleX(1.015);transform-origin:center top;">9/22/2025</div>
<div class="t" style="left:506.30px;width:1000px;text-align:center;top:931.54px;font-size:15.4px;color:#6a6a6a;font-weight:normal;font-style:normal;transform:scaleX(1.03);transform-origin:center top;">9/26/2025</div>
<div class="t" style="left:591.50px;width:1000px;text-align:center;top:931.54px;font-size:15.4px;color:#6a6a6a;font-weight:normal;font-style:normal;transform:scaleX(1.02);transform-origin:center top;">9/26/2025</div>
<div class="t" style="left:677.00px;width:1000px;text-align:center;top:931.54px;font-size:15.4px;color:#6a6a6a;font-weight:normal;font-style:normal;transform:scaleX(0.841);transform-origin:center top;">TRUE</div>
<div class="t" style="right:372.00px;top:931.54px;font-size:15.4px;color:#6a6a6a;font-weight:normal;font-style:normal;">113</div>
<div class="t" style="right:286.00px;top:931.54px;font-size:15.4px;color:#6a6a6a;font-weight:normal;font-style:normal;">113</div>
<div class="t" style="right:201.00px;top:931.54px;font-size:15.4px;color:#6a6a6a;font-weight:normal;font-style:normal;">0.3</div>
<div class="t" style="left:147.50px;top:954.06px;font-size:15.4px;color:#6a6a6a;font-weight:normal;font-style:normal;transform:scaleX(0.939);transform-origin:left top;">ORD-20250</div>
<div class="t" style="left:235.00px;top:954.06px;font-size:15.4px;color:#6a6a6a;font-weight:normal;font-style:normal;transform:scaleX(0.931);transform-origin:left top;">PICK-202509-109</div>
<div class="t" style="left:360.00px;top:954.06px;font-size:15.4px;color:#6a6a6a;font-weight:normal;font-style:normal;transform:scaleX(0.931);transform-origin:left top;">PRD0014</div>
<div class="t" style="left:634.00px;top:954.06px;font-size:15.4px;color:#6a6a6a;font-weight:normal;font-style:normal;transform:scaleX(0.903);transform-origin:left top;">ZONE-C</div>
<div class="t" style="left:702.00px;top:954.06px;font-size:15.4px;color:#6a6a6a;font-weight:normal;font-style:normal;transform:scaleX(0.949);transform-origin:left top;">EMP0034</div>
<div class="t" style="left:337.50px;width:1000px;text-align:center;top:954.06px;font-size:15.4px;color:#6a6a6a;font-weight:normal;font-style:normal;transform:scaleX(0.841);transform-origin:center top;">TRUE</div>
<div class="t" style="left:421.80px;width:1000px;text-align:center;top:954.06px;font-size:15.4px;color:#6a6a6a;font-weight:normal;font-style:normal;transform:scaleX(1.015);transform-origin:center top;">9/15/2025</div>
<div class="t" style="left:506.30px;width:1000px;text-align:center;top:954.06px;font-size:15.4px;color:#6a6a6a;font-weight:normal;font-style:normal;transform:scaleX(1.03);transform-origin:center top;">9/17/2025</div>
<div class="t" style="left:591.50px;width:1000px;text-align:center;top:954.06px;font-size:15.4px;color:#6a6a6a;font-weight:normal;font-style:normal;transform:scaleX(1.02);transform-origin:center top;">9/19/2025</div>
<div class="t" style="left:677.00px;width:1000px;text-align:center;top:954.06px;font-size:15.4px;color:#6a6a6a;font-weight:normal;font-style:normal;transform:scaleX(0.841);transform-origin:center top;">TRUE</div>
<div class="t" style="right:372.00px;top:954.06px;font-size:15.4px;color:#6a6a6a;font-weight:normal;font-style:normal;">10</div>
<div class="t" style="right:286.00px;top:954.06px;font-size:15.4px;color:#6a6a6a;font-weight:normal;font-style:normal;">10</div>
<div class="t" style="right:201.00px;top:954.06px;font-size:15.4px;color:#6a6a6a;font-weight:normal;font-style:normal;">0.0</div>
<div class="t" style="left:147.50px;top:976.58px;font-size:15.4px;color:#6a6a6a;font-weight:normal;font-style:normal;transform:scaleX(0.939);transform-origin:left top;">ORD-20250</div>
<div class="t" style="left:235.00px;top:976.58px;font-size:15.4px;color:#6a6a6a;font-weight:normal;font-style:normal;transform:scaleX(0.931);transform-origin:left top;">PICK-202509-343</div>
<div class="t" style="left:360.00px;top:976.58px;font-size:15.4px;color:#6a6a6a;font-weight:normal;font-style:normal;transform:scaleX(0.931);transform-origin:left top;">PRD0016</div>
<div class="t" style="left:634.00px;top:976.58px;font-size:15.4px;color:#6a6a6a;font-weight:normal;font-style:normal;transform:scaleX(0.903);transform-origin:left top;">ZONE-C</div>
<div class="t" style="left:702.00px;top:976.58px;font-size:15.4px;color:#6a6a6a;font-weight:normal;font-style:normal;transform:scaleX(0.949);transform-origin:left top;">EMP0071</div>
<div class="t" style="left:337.50px;width:1000px;text-align:center;top:976.58px;font-size:15.4px;color:#6a6a6a;font-weight:normal;font-style:normal;transform:scaleX(0.841);transform-origin:center top;">TRUE</div>
<div class="t" style="left:421.80px;width:1000px;text-align:center;top:976.58px;font-size:15.4px;color:#6a6a6a;font-weight:normal;font-style:normal;transform:scaleX(1.015);transform-origin:center top;">9/12/2025</div>
<div class="t" style="left:506.30px;width:1000px;text-align:center;top:976.58px;font-size:15.4px;color:#6a6a6a;font-weight:normal;font-style:normal;transform:scaleX(1.03);transform-origin:center top;">9/15/2025</div>
<div class="t" style="left:591.50px;width:1000px;text-align:center;top:976.58px;font-size:15.4px;color:#6a6a6a;font-weight:normal;font-style:normal;transform:scaleX(1.02);transform-origin:center top;">9/17/2025</div>
<div class="t" style="left:677.00px;width:1000px;text-align:center;top:976.58px;font-size:15.4px;color:#6a6a6a;font-weight:normal;font-style:normal;transform:scaleX(0.841);transform-origin:center top;">TRUE</div>
<div class="t" style="right:372.00px;top:976.58px;font-size:15.4px;color:#6a6a6a;font-weight:normal;font-style:normal;">327</div>
<div class="t" style="right:286.00px;top:976.58px;font-size:15.4px;color:#6a6a6a;font-weight:normal;font-style:normal;">327</div>
<div class="t" style="right:201.00px;top:976.58px;font-size:15.4px;color:#6a6a6a;font-weight:normal;font-style:normal;">0.4</div>
<div class="t" style="left:147.50px;top:999.10px;font-size:15.4px;color:#6a6a6a;font-weight:normal;font-style:normal;transform:scaleX(0.939);transform-origin:left top;">ORD-20250</div>
<div class="t" style="left:235.00px;top:999.10px;font-size:15.4px;color:#6a6a6a;font-weight:normal;font-style:normal;transform:scaleX(0.931);transform-origin:left top;">PICK-202509-764</div>
<div class="t" style="left:360.00px;top:999.10px;font-size:15.4px;color:#6a6a6a;font-weight:normal;font-style:normal;transform:scaleX(0.931);transform-origin:left top;">PRD0021</div>
<div class="t" style="left:634.00px;top:999.10px;font-size:15.4px;color:#6a6a6a;font-weight:normal;font-style:normal;transform:scaleX(0.903);transform-origin:left top;">ZONE-D</div>
<div class="t" style="left:702.00px;top:999.10px;font-size:15.4px;color:#6a6a6a;font-weight:normal;font-style:normal;transform:scaleX(0.949);transform-origin:left top;">EMP0096</div>
<div class="t" style="left:337.50px;width:1000px;text-align:center;top:999.10px;font-size:15.4px;color:#6a6a6a;font-weight:normal;font-style:normal;transform:scaleX(0.841);transform-origin:center top;">TRUE</div>
<div class="t" style="left:421.80px;width:1000px;text-align:center;top:999.10px;font-size:15.4px;color:#6a6a6a;font-weight:normal;font-style:normal;transform:scaleX(1.015);transform-origin:center top;">9/2/2025</div>
<div class="t" style="left:506.30px;width:1000px;text-align:center;top:999.10px;font-size:15.4px;color:#6a6a6a;font-weight:normal;font-style:normal;transform:scaleX(1.03);transform-origin:center top;">9/5/2025</div>
<div class="t" style="left:591.50px;width:1000px;text-align:center;top:999.10px;font-size:15.4px;color:#6a6a6a;font-weight:normal;font-style:normal;transform:scaleX(1.02);transform-origin:center top;">9/7/2025</div>
<div class="t" style="left:677.00px;width:1000px;text-align:center;top:999.10px;font-size:15.4px;color:#6a6a6a;font-weight:normal;font-style:normal;transform:scaleX(0.841);transform-origin:center top;">TRUE</div>
<div class="t" style="right:372.00px;top:999.10px;font-size:15.4px;color:#6a6a6a;font-weight:normal;font-style:normal;">31</div>
<div class="t" style="right:286.00px;top:999.10px;font-size:15.4px;color:#6a6a6a;font-weight:normal;font-style:normal;">31</div>
<div class="t" style="right:201.00px;top:999.10px;font-size:15.4px;color:#6a6a6a;font-weight:normal;font-style:normal;">0.1</div>
<div class="t" style="left:147.50px;top:1021.62px;font-size:15.4px;color:#6a6a6a;font-weight:normal;font-style:normal;transform:scaleX(0.939);transform-origin:left top;">ORD-20250</div>
<div class="t" style="left:235.00px;top:1021.62px;font-size:15.4px;color:#6a6a6a;font-weight:normal;font-style:normal;transform:scaleX(0.931);transform-origin:left top;">PICK-202509-279</div>
<div class="t" style="left:360.00px;top:1021.62px;font-size:15.4px;color:#6a6a6a;font-weight:normal;font-style:normal;transform:scaleX(0.931);transform-origin:left top;">PRD0002</div>
<div class="t" style="left:634.00px;top:1021.62px;font-size:15.4px;color:#6a6a6a;font-weight:normal;font-style:normal;transform:scaleX(0.903);transform-origin:left top;">ZONE-C</div>
<div class="t" style="left:702.00px;top:1021.62px;font-size:15.4px;color:#6a6a6a;font-weight:normal;font-style:normal;transform:scaleX(0.949);transform-origin:left top;">EMP0077</div>
<div class="t" style="left:337.50px;width:1000px;text-align:center;top:1021.62px;font-size:15.4px;color:#6a6a6a;font-weight:normal;font-style:normal;transform:scaleX(0.841);transform-origin:center top;">TRUE</div>
<div class="t" style="left:421.80px;width:1000px;text-align:center;top:1021.62px;font-size:15.4px;color:#6a6a6a;font-weight:normal;font-style:normal;transform:scaleX(1.015);transform-origin:center top;">9/17/2025</div>
<div class="t" style="left:506.30px;width:1000px;text-align:center;top:1021.62px;font-size:15.4px;color:#6a6a6a;font-weight:normal;font-style:normal;transform:scaleX(1.03);transform-origin:center top;">9/22/2025</div>
<div class="t" style="left:591.50px;width:1000px;text-align:center;top:1021.62px;font-size:15.4px;color:#6a6a6a;font-weight:normal;font-style:normal;transform:scaleX(1.02);transform-origin:center top;">9/24/2025</div>
<div class="t" style="left:677.00px;width:1000px;text-align:center;top:1021.62px;font-size:15.4px;color:#6a6a6a;font-weight:normal;font-style:normal;transform:scaleX(0.841);transform-origin:center top;">TRUE</div>
<div class="t" style="right:372.00px;top:1021.62px;font-size:15.4px;color:#6a6a6a;font-weight:normal;font-style:normal;">34</div>
<div class="t" style="right:286.00px;top:1021.62px;font-size:15.4px;color:#6a6a6a;font-weight:normal;font-style:normal;">34</div>
<div class="t" style="right:201.00px;top:1021.62px;font-size:15.4px;color:#6a6a6a;font-weight:normal;font-style:normal;">0.1</div>
<div class="t" style="left:147.50px;top:1044.15px;font-size:15.4px;color:#6a6a6a;font-weight:normal;font-style:normal;transform:scaleX(0.939);transform-origin:left top;">ORD-20250</div>
<div class="t" style="left:235.00px;top:1044.15px;font-size:15.4px;color:#6a6a6a;font-weight:normal;font-style:normal;transform:scaleX(0.931);transform-origin:left top;">PICK-202509-666</div>
<div class="t" style="left:360.00px;top:1044.15px;font-size:15.4px;color:#6a6a6a;font-weight:normal;font-style:normal;transform:scaleX(0.931);transform-origin:left top;">PRD0018</div>
<div class="t" style="left:634.00px;top:1044.15px;font-size:15.4px;color:#6a6a6a;font-weight:normal;font-style:normal;transform:scaleX(0.903);transform-origin:left top;">ZONE-A</div>
<div class="t" style="left:702.00px;top:1044.15px;font-size:15.4px;color:#6a6a6a;font-weight:normal;font-style:normal;transform:scaleX(0.949);transform-origin:left top;">EMP0035</div>
<div class="t" style="left:337.50px;width:1000px;text-align:center;top:1044.15px;font-size:15.4px;color:#6a6a6a;font-weight:normal;font-style:normal;transform:scaleX(0.841);transform-origin:center top;">TRUE</div>
<div class="t" style="left:421.80px;width:1000px;text-align:center;top:1044.15px;font-size:15.4px;color:#6a6a6a;font-weight:normal;font-style:normal;transform:scaleX(1.015);transform-origin:center top;">9/3/2025</div>
<div class="t" style="left:506.30px;width:1000px;text-align:center;top:1044.15px;font-size:15.4px;color:#6a6a6a;font-weight:normal;font-style:normal;transform:scaleX(1.03);transform-origin:center top;">9/3/2025</div>
<div class="t" style="left:591.50px;width:1000px;text-align:center;top:1044.15px;font-size:15.4px;color:#6a6a6a;font-weight:normal;font-style:normal;transform:scaleX(1.02);transform-origin:center top;">9/4/2025</div>
<div class="t" style="left:677.00px;width:1000px;text-align:center;top:1044.15px;font-size:15.4px;color:#6a6a6a;font-weight:normal;font-style:normal;transform:scaleX(0.841);transform-origin:center top;">TRUE</div>
<div class="t" style="right:372.00px;top:1044.15px;font-size:15.4px;color:#6a6a6a;font-weight:normal;font-style:normal;">1</div>
<div class="t" style="right:286.00px;top:1044.15px;font-size:15.4px;color:#6a6a6a;font-weight:normal;font-style:normal;">1</div>
<div class="t" style="right:217.00px;top:1044.15px;font-size:15.4px;color:#6a6a6a;font-weight:normal;font-style:normal;">-</div>
<div class="r" style="left:136px;top:1071.8px;width:1591px;height:2.8px;background:#ededed;"></div>
<div class="t" style="left:1364.80px;top:1087.71px;font-size:15.7px;color:#48546c;font-weight:bold;font-style:normal;transform:scaleX(0.906);transform-origin:left top;">Grand Total</div>
<div class="r" style="left:1464px;top:1083px;width:263px;height:23.5px;background:#d9d9d9;"></div>
<div class="t" style="right:372.80px;top:1087.29px;font-size:15.6px;color:#555;font-weight:bold;font-style:normal;transform:scaleX(0.95);transform-origin:right top;">742,554</div>
<div class="t" style="right:286.80px;top:1087.29px;font-size:15.6px;color:#555;font-weight:bold;font-style:normal;transform:scaleX(0.95);transform-origin:right top;">742,554</div>
<div class="t" style="right:200.80px;top:1087.29px;font-size:15.6px;color:#555;font-weight:bold;font-style:normal;transform:scaleX(0.95);transform-origin:right top;">1,286.8</div>
</body></html>
